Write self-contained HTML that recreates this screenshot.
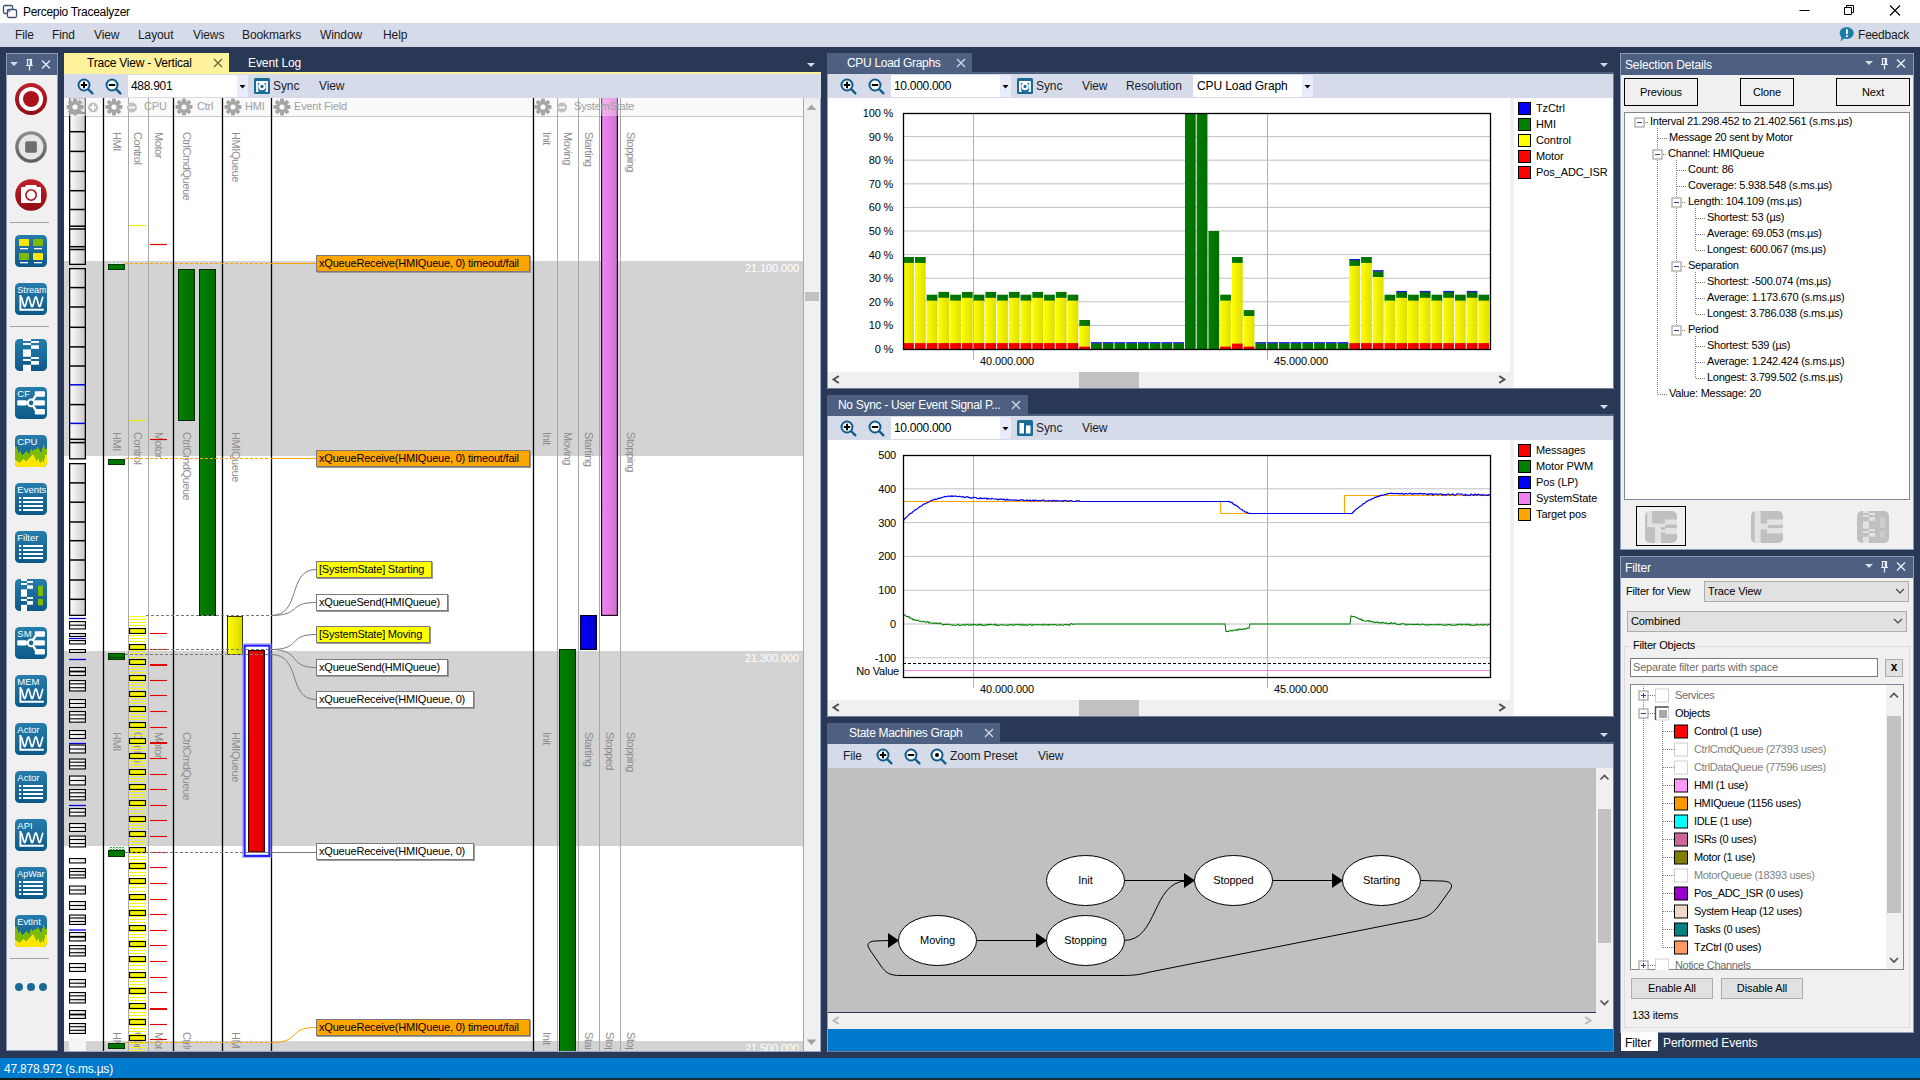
<!DOCTYPE html>
<html><head><meta charset="utf-8"><title>Percepio Tracealyzer</title>
<style>
html,body{margin:0;padding:0;width:1920px;height:1080px;overflow:hidden;background:#293955;font-family:"Liberation Sans",sans-serif;}
body div,body svg{position:absolute;box-sizing:border-box;}
.t{white-space:nowrap;line-height:1.25;}
.v{white-space:nowrap;line-height:1;transform-origin:0 0;transform:rotate(90deg);color:#8c8c8c;font-size:11px;letter-spacing:-0.42px;}
.lbl{white-space:nowrap;font-size:11px;letter-spacing:-0.19px;line-height:15px;height:17px;border:1px solid #7a7a7a;box-shadow:1px 1px 0 #9a9a9a;padding:0 0 0 2px;color:#000;}
</style></head><body>
<div style="left:0px;top:0px;width:1920px;height:23px;background:#ffffff;"></div>
<svg style="left:2px;top:4px;" width="16" height="16" viewBox="0 0 16 16"><rect x="1.5" y="1.5" width="9" height="8" rx="1.5" fill="none" stroke="#3b4e78" stroke-width="1.3"/><rect x="5.5" y="5.5" width="9" height="8" rx="1.5" fill="#fff" stroke="#3b4e78" stroke-width="1.3"/><rect x="5" y="5" width="3.5" height="3" fill="#3b4e78" opacity=".55"/></svg>
<div class="t" style="left:23px;top:5px;font-size:12px;color:#000;letter-spacing:-0.3px;">Percepio Tracealyzer</div>
<svg style="left:1790px;top:0px;" width="130" height="23" viewBox="0 0 130 23"><path d="M9.5 10.5h10" stroke="#000" stroke-width="1" fill="none"/><path d="M54.5 7.5h7v7h-7z M56.5 7.5v-2h7v7h-2" stroke="#000" stroke-width="1" fill="none"/><path d="M100 5.5l10 10M110 5.5l-10 10" stroke="#000" stroke-width="1.1" fill="none"/></svg>
<div style="left:0px;top:23px;width:1920px;height:24px;background:#d6dbe9;"></div>
<div class="t" style="left:15px;top:28px;font-size:12px;color:#1b1b1b;letter-spacing:-0.1px;">File</div>
<div class="t" style="left:52px;top:28px;font-size:12px;color:#1b1b1b;letter-spacing:-0.1px;">Find</div>
<div class="t" style="left:94px;top:28px;font-size:12px;color:#1b1b1b;letter-spacing:-0.1px;">View</div>
<div class="t" style="left:138px;top:28px;font-size:12px;color:#1b1b1b;letter-spacing:-0.1px;">Layout</div>
<div class="t" style="left:193px;top:28px;font-size:12px;color:#1b1b1b;letter-spacing:-0.1px;">Views</div>
<div class="t" style="left:242px;top:28px;font-size:12px;color:#1b1b1b;letter-spacing:-0.1px;">Bookmarks</div>
<div class="t" style="left:320px;top:28px;font-size:12px;color:#1b1b1b;letter-spacing:-0.1px;">Window</div>
<div class="t" style="left:383px;top:28px;font-size:12px;color:#1b1b1b;letter-spacing:-0.1px;">Help</div>
<svg style="left:1838px;top:26px;" width="18" height="18" viewBox="0 0 18 18"><path d="M8.7 1.2c4 0 7 2.6 7 5.9s-3 5.9-7 5.900c-.9 0-1.800-.1-2.600-.4L2.500 15.500l1-4.100C2.400 10.300 1.700 8.800 1.700 7.100c0-3.300 3-5.900 7-5.900z" fill="#1c7ca6"/><rect x="8" y="3.2" width="1.8" height="5" fill="#fff"/><rect x="8" y="9.300" width="1.800" height="1.800" fill="#fff"/></svg>
<div class="t" style="left:1858px;top:28px;font-size:12px;color:#1b1b1b;letter-spacing:-0.2px;">Feedback</div>
<div style="left:0px;top:1058px;width:1920px;height:22px;background:#007acc;"></div>
<div class="t" style="left:4px;top:1062px;font-size:12px;color:#fff;letter-spacing:-0.2px;">47.878.972 (s.ms.µs)</div>
<div style="left:0px;top:1078px;width:1920px;height:2px;background:#1c2a33;"></div>
<div style="left:0px;top:1078px;width:440px;height:2px;background:#0f1a14;"></div>
<div style="left:6px;top:53px;width:52px;height:998px;background:#f0f0f0;border:1px solid #8e9bbc;"></div>
<div style="left:6px;top:53px;width:52px;height:22px;background:#4d6082;border:1px solid #8e9bbc;border-bottom:none;"></div>
<svg style="left:7px;top:54px;" width="50" height="20" viewBox="0 0 50 20"><path d="M3 8h8l-4 4z" fill="#d6dbe9"/><path d="M20.500 5.500h4v6h-4z M19 11.500h7 M22.500 11.500v5" stroke="#e8ecf5" stroke-width="1.2" fill="none"/><path d="M23.500 5.500v6" stroke="#e8ecf5" stroke-width="1.600"/><path d="M35 6.500l8 8M43 6.500l-8 8" stroke="#e8ecf5" stroke-width="1.400" fill="none"/></svg>
<svg style="left:6px;top:53px;" width="52" height="998" viewBox="0 0 52 998"><defs><linearGradient id="lg" x1="0" y1="0" x2="0" y2="1"><stop offset="0" stop-color="#267dac"/><stop offset="1" stop-color="#0d5889"/></linearGradient><linearGradient id="rg" x1="0" y1="0" x2="0" y2="1"><stop offset="0" stop-color="#c0202c"/><stop offset="1" stop-color="#8f0d14"/></linearGradient><linearGradient id="gg" x1="0" y1="0" x2="0" y2="1"><stop offset="0" stop-color="#8d8d8d"/><stop offset="1" stop-color="#5e5e5e"/></linearGradient></defs><circle cx="25" cy="46" r="16" fill="url(#rg)"/><circle cx="25" cy="46" r="12.100" fill="#fff"/><circle cx="25" cy="46" r="8" fill="#ab121b"/><circle cx="25" cy="94" r="15.800" fill="url(#gg)"/><circle cx="25" cy="94" r="12.400" fill="#e6e6e6"/><rect x="19.200" y="88.200" width="11.700" height="11.600" rx="1.800" fill="#6e6e6e"/><circle cx="25" cy="142" r="15.800" fill="url(#rg)"/><path d="M16 134h3l1-2h10l1 2h3a1 1 0 0 1 1 1v14a1 1 0 0 1-1 1H16a1 1 0 0 1-1-1v-14a1 1 0 0 1 1-1z" fill="#fff"/><circle cx="25.100" cy="142" r="5.200" fill="#fff" stroke="#a9131c" stroke-width="1.600"/><path d="M4 169.5h39" stroke="#a0a0a0" stroke-width="1"/><path d="M4 273.5h39" stroke="#a0a0a0" stroke-width="1"/><path d="M4 905.5h39" stroke="#a0a0a0" stroke-width="1"/><rect x="9" y="182" width="32" height="32" rx="4.500" fill="url(#lg)"/><rect x="13" y="186" width="10" height="7" rx="0.800" fill="#ffe600"/><rect x="27" y="186" width="10" height="7" rx="0.800" fill="#7fba00"/><rect x="13" y="200" width="10" height="7" rx="0.800" fill="#7fba00"/><rect x="27" y="200" width="10" height="7" rx="0.800" fill="#ffe600"/><rect x="14" y="195" width="8" height="1.300" fill="#fff"/><rect x="14" y="209" width="8" height="1.300" fill="#fff"/><rect x="28" y="195" width="8" height="1.300" fill="#fff"/><rect x="28" y="209" width="8" height="1.300" fill="#fff"/><rect x="9" y="230" width="32" height="32" rx="4.500" fill="url(#lg)"/><text x="11.300" y="240" font-family="Liberation Sans" font-size="9.1" fill="#fff">Stream</text><path d="M14.400 242v14.800h23.400" stroke="#fff" stroke-width="1.900" fill="none"/><polyline points="14.90,244.00 15.41,244.43 15.92,245.66 16.43,247.45 16.94,249.48 17.45,251.40 17.95,252.84 18.46,253.55 18.97,253.41 19.48,252.43 19.99,250.79 20.50,248.80 21.01,246.81 21.52,245.17 22.03,244.19 22.54,244.05 23.05,244.76 23.55,246.20 24.06,248.12 24.57,250.15 25.08,251.94 25.59,253.17 26.10,253.60 26.61,253.17 27.12,251.94 27.63,250.15 28.14,248.12 28.65,246.20 29.15,244.76 29.66,244.05 30.17,244.19 30.68,245.17 31.19,246.81 31.70,248.80 32.21,250.79 32.72,252.43 33.23,253.41 33.74,253.55 34.25,252.84 34.75,251.40 35.26,249.48 35.77,247.45 36.28,245.66 36.79,244.43 37.30,244.00" stroke="#fff" stroke-width="1.700" fill="none" stroke-linejoin="round"/><rect x="9" y="286" width="32" height="32" rx="4.500" fill="url(#lg)"/><rect x="17" y="286" width="8" height="2" fill="#fff"/><rect x="17" y="290" width="8" height="2" fill="#fff"/><rect x="17" y="296.4" width="8" height="7.299999999999999" fill="#fff"/><rect x="17" y="306" width="8" height="2" fill="#fff"/><rect x="17" y="311.8" width="8" height="6.199999999999999" fill="#fff"/><rect x="25" y="288" width="8" height="2" fill="#fff"/><rect x="25" y="292.3" width="8" height="3.500000000000001" fill="#fff"/><rect x="25" y="304" width="8" height="2" fill="#fff"/><rect x="25" y="308" width="8" height="3.6999999999999993" fill="#fff"/><rect x="9" y="334" width="32" height="32" rx="4.500" fill="url(#lg)"/><text x="11.300" y="344" font-family="Liberation Sans" font-size="9.5" fill="#fff">CF</text><rect x="28.800" y="338.3" width="10.100" height="5.400" rx="1" fill="#fff"/><rect x="28.800" y="347.2" width="10.100" height="5.400" rx="1" fill="#fff"/><rect x="28.800" y="356" width="10.100" height="5.400" rx="1" fill="#fff"/><rect x="11.200" y="347.2" width="9.500" height="5.400" rx="1" fill="#fff"/><path d="M20 349.9h9M25.1 349.9l5.500-8.500M25.1 349.9l5.500 8.500" stroke="#fff" stroke-width="2.400" fill="none"/><circle cx="25.1" cy="349.9" r="4.300" fill="#fff"/><circle cx="25.1" cy="349.9" r="2.300" fill="#1a6a98"/><rect x="9" y="382" width="32" height="32" rx="4.500" fill="url(#lg)"/><clipPath id="c382"><rect x="9" y="382" width="32" height="32" rx="4.500"/></clipPath><g clip-path="url(#c382)"><rect x="9" y="394" width="1.050" height="20" fill="#7fba00"/><rect x="10" y="394" width="1.050" height="20" fill="#7fba00"/><rect x="11" y="397" width="1.050" height="17" fill="#7fba00"/><rect x="12" y="400" width="1.050" height="14" fill="#7fba00"/><rect x="13" y="399" width="1.050" height="15" fill="#7fba00"/><rect x="14" y="398" width="1.050" height="16" fill="#7fba00"/><rect x="15" y="401" width="1.050" height="13" fill="#7fba00"/><rect x="16" y="402" width="1.050" height="12" fill="#7fba00"/><rect x="17" y="401" width="1.050" height="13" fill="#7fba00"/><rect x="18" y="400" width="1.050" height="14" fill="#7fba00"/><rect x="19" y="399" width="1.050" height="15" fill="#7fba00"/><rect x="20" y="398" width="1.050" height="16" fill="#7fba00"/><rect x="21" y="399" width="1.050" height="15" fill="#7fba00"/><rect x="22" y="401" width="1.050" height="13" fill="#7fba00"/><rect x="23" y="400" width="1.050" height="14" fill="#7fba00"/><rect x="24" y="397" width="1.050" height="17" fill="#7fba00"/><rect x="25" y="396" width="1.050" height="18" fill="#7fba00"/><rect x="26" y="398" width="1.050" height="16" fill="#7fba00"/><rect x="27" y="397" width="1.050" height="17" fill="#7fba00"/><rect x="28" y="396" width="1.050" height="18" fill="#7fba00"/><rect x="29" y="397" width="1.050" height="17" fill="#7fba00"/><rect x="30" y="396" width="1.050" height="18" fill="#7fba00"/><rect x="31" y="394" width="1.050" height="20" fill="#7fba00"/><rect x="32" y="395" width="1.050" height="19" fill="#7fba00"/><rect x="33" y="397" width="1.050" height="17" fill="#7fba00"/><rect x="34" y="399" width="1.050" height="15" fill="#7fba00"/><rect x="35" y="398" width="1.050" height="16" fill="#7fba00"/><rect x="36" y="395" width="1.050" height="19" fill="#7fba00"/><rect x="37" y="392" width="1.050" height="22" fill="#7fba00"/><rect x="38" y="394" width="1.050" height="20" fill="#7fba00"/><rect x="39" y="396" width="1.050" height="18" fill="#7fba00"/><rect x="40" y="396" width="1.050" height="18" fill="#7fba00"/><rect x="9" y="407" width="1.050" height="7" fill="#ffe600"/><rect x="10" y="408" width="1.050" height="6" fill="#ffe600"/><rect x="11" y="408" width="1.050" height="6" fill="#ffe600"/><rect x="12" y="409" width="1.050" height="5" fill="#ffe600"/><rect x="13" y="410" width="1.050" height="4" fill="#ffe600"/><rect x="14" y="409" width="1.050" height="5" fill="#ffe600"/><rect x="15" y="408" width="1.050" height="6" fill="#ffe600"/><rect x="16" y="407" width="1.050" height="7" fill="#ffe600"/><rect x="17" y="406" width="1.050" height="8" fill="#ffe600"/><rect x="18" y="407" width="1.050" height="7" fill="#ffe600"/><rect x="19" y="408" width="1.050" height="6" fill="#ffe600"/><rect x="20" y="408" width="1.050" height="6" fill="#ffe600"/><rect x="21" y="407" width="1.050" height="7" fill="#ffe600"/><rect x="22" y="406" width="1.050" height="8" fill="#ffe600"/><rect x="23" y="405" width="1.050" height="9" fill="#ffe600"/><rect x="24" y="404" width="1.050" height="10" fill="#ffe600"/><rect x="25" y="403" width="1.050" height="11" fill="#ffe600"/><rect x="26" y="402" width="1.050" height="12" fill="#ffe600"/><rect x="27" y="402" width="1.050" height="12" fill="#ffe600"/><rect x="28" y="404" width="1.050" height="10" fill="#ffe600"/><rect x="29" y="406" width="1.050" height="8" fill="#ffe600"/><rect x="30" y="408" width="1.050" height="6" fill="#ffe600"/><rect x="31" y="407" width="1.050" height="7" fill="#ffe600"/><rect x="32" y="406" width="1.050" height="8" fill="#ffe600"/><rect x="33" y="409" width="1.050" height="5" fill="#ffe600"/><rect x="34" y="410" width="1.050" height="4" fill="#ffe600"/><rect x="35" y="409" width="1.050" height="5" fill="#ffe600"/><rect x="36" y="408" width="1.050" height="6" fill="#ffe600"/><rect x="37" y="409" width="1.050" height="5" fill="#ffe600"/><rect x="38" y="406" width="1.050" height="8" fill="#ffe600"/><rect x="39" y="402" width="1.050" height="12" fill="#ffe600"/><rect x="40" y="402" width="1.050" height="12" fill="#ffe600"/></g><text x="11.300" y="392" font-family="Liberation Sans" font-size="9.5" fill="#fff">CPU</text><rect x="9" y="430" width="32" height="32" rx="4.500" fill="url(#lg)"/><text x="11.300" y="440" font-family="Liberation Sans" font-size="9.5" fill="#fff">Events</text><rect x="13" y="444" width="2.200" height="2" fill="#fff"/><rect x="17" y="444" width="20" height="2" fill="#fff"/><rect x="13" y="448" width="2.200" height="2" fill="#fff"/><rect x="17" y="448" width="20" height="2" fill="#fff"/><rect x="13" y="452" width="2.200" height="2" fill="#fff"/><rect x="17" y="452" width="20" height="2" fill="#fff"/><rect x="13" y="456" width="2.200" height="2" fill="#fff"/><rect x="17" y="456" width="20" height="2" fill="#fff"/><rect x="9" y="478" width="32" height="32" rx="4.500" fill="url(#lg)"/><text x="11.300" y="488" font-family="Liberation Sans" font-size="9.5" fill="#fff">Filter</text><rect x="13" y="492" width="2.200" height="2" fill="#fff"/><rect x="17" y="492" width="20" height="2" fill="#fff"/><rect x="13" y="496" width="2.200" height="2" fill="#fff"/><rect x="17" y="496" width="20" height="2" fill="#fff"/><rect x="13" y="500" width="2.200" height="2" fill="#fff"/><rect x="17" y="500" width="20" height="2" fill="#fff"/><rect x="13" y="504" width="2.200" height="2" fill="#fff"/><rect x="17" y="504" width="20" height="2" fill="#fff"/><rect x="9" y="526" width="32" height="32" rx="4.500" fill="url(#lg)"/><rect x="15" y="526" width="6" height="2" fill="#fff"/><rect x="15" y="530" width="6" height="2" fill="#fff"/><rect x="15" y="536.4" width="6" height="7.299999999999999" fill="#fff"/><rect x="15" y="546" width="6" height="2" fill="#fff"/><rect x="15" y="551.8" width="6" height="6.199999999999999" fill="#fff"/><rect x="21" y="528" width="6" height="2" fill="#fff"/><rect x="21" y="532.3" width="6" height="3.500000000000001" fill="#fff"/><rect x="21" y="544" width="6" height="2" fill="#fff"/><rect x="21" y="548" width="6" height="3.6999999999999993" fill="#fff"/><rect x="32" y="532.7" width="5" height="10.300" fill="#7fba00"/><rect x="32" y="546" width="5" height="6.300" fill="#7fba00"/><rect x="9" y="574" width="32" height="32" rx="4.500" fill="url(#lg)"/><text x="11.300" y="584" font-family="Liberation Sans" font-size="9.5" fill="#fff">SM</text><rect x="28.800" y="578.3" width="10.100" height="5.400" rx="1" fill="#fff"/><rect x="28.800" y="587.2" width="10.100" height="5.400" rx="1" fill="#fff"/><rect x="28.800" y="596" width="10.100" height="5.400" rx="1" fill="#fff"/><rect x="11.200" y="587.2" width="9.500" height="5.400" rx="1" fill="#fff"/><path d="M20 589.9h9M25.1 589.9l5.500-8.500M25.1 589.9l5.500 8.500" stroke="#fff" stroke-width="2.400" fill="none"/><circle cx="25.1" cy="589.9" r="4.300" fill="#fff"/><circle cx="25.1" cy="589.9" r="2.300" fill="#1a6a98"/><rect x="9" y="622" width="32" height="32" rx="4.500" fill="url(#lg)"/><text x="11.300" y="632" font-family="Liberation Sans" font-size="9.5" fill="#fff">MEM</text><path d="M14.400 634v14.800h23.400" stroke="#fff" stroke-width="1.900" fill="none"/><polyline points="14.90,636.00 15.41,636.43 15.92,637.66 16.43,639.45 16.94,641.48 17.45,643.40 17.95,644.84 18.46,645.55 18.97,645.41 19.48,644.43 19.99,642.79 20.50,640.80 21.01,638.81 21.52,637.17 22.03,636.19 22.54,636.05 23.05,636.76 23.55,638.20 24.06,640.12 24.57,642.15 25.08,643.94 25.59,645.17 26.10,645.60 26.61,645.17 27.12,643.94 27.63,642.15 28.14,640.12 28.65,638.20 29.15,636.76 29.66,636.05 30.17,636.19 30.68,637.17 31.19,638.81 31.70,640.80 32.21,642.79 32.72,644.43 33.23,645.41 33.74,645.55 34.25,644.84 34.75,643.40 35.26,641.48 35.77,639.45 36.28,637.66 36.79,636.43 37.30,636.00" stroke="#fff" stroke-width="1.700" fill="none" stroke-linejoin="round"/><rect x="9" y="670" width="32" height="32" rx="4.500" fill="url(#lg)"/><text x="11.300" y="680" font-family="Liberation Sans" font-size="9.5" fill="#fff">Actor</text><path d="M14.400 682v14.800h23.400" stroke="#fff" stroke-width="1.900" fill="none"/><polyline points="14.90,684.00 15.41,684.43 15.92,685.66 16.43,687.45 16.94,689.48 17.45,691.40 17.95,692.84 18.46,693.55 18.97,693.41 19.48,692.43 19.99,690.79 20.50,688.80 21.01,686.81 21.52,685.17 22.03,684.19 22.54,684.05 23.05,684.76 23.55,686.20 24.06,688.12 24.57,690.15 25.08,691.94 25.59,693.17 26.10,693.60 26.61,693.17 27.12,691.94 27.63,690.15 28.14,688.12 28.65,686.20 29.15,684.76 29.66,684.05 30.17,684.19 30.68,685.17 31.19,686.81 31.70,688.80 32.21,690.79 32.72,692.43 33.23,693.41 33.74,693.55 34.25,692.84 34.75,691.40 35.26,689.48 35.77,687.45 36.28,685.66 36.79,684.43 37.30,684.00" stroke="#fff" stroke-width="1.700" fill="none" stroke-linejoin="round"/><rect x="9" y="718" width="32" height="32" rx="4.500" fill="url(#lg)"/><text x="11.300" y="728" font-family="Liberation Sans" font-size="9.5" fill="#fff">Actor</text><rect x="13" y="732" width="2.200" height="2" fill="#fff"/><rect x="17" y="732" width="20" height="2" fill="#fff"/><rect x="13" y="736" width="2.200" height="2" fill="#fff"/><rect x="17" y="736" width="20" height="2" fill="#fff"/><rect x="13" y="740" width="2.200" height="2" fill="#fff"/><rect x="17" y="740" width="20" height="2" fill="#fff"/><rect x="13" y="744" width="2.200" height="2" fill="#fff"/><rect x="17" y="744" width="20" height="2" fill="#fff"/><rect x="9" y="766" width="32" height="32" rx="4.500" fill="url(#lg)"/><text x="11.300" y="776" font-family="Liberation Sans" font-size="9.5" fill="#fff">API</text><path d="M14.400 778v14.800h23.400" stroke="#fff" stroke-width="1.900" fill="none"/><polyline points="14.90,780.00 15.41,780.43 15.92,781.66 16.43,783.45 16.94,785.48 17.45,787.40 17.95,788.84 18.46,789.55 18.97,789.41 19.48,788.43 19.99,786.79 20.50,784.80 21.01,782.81 21.52,781.17 22.03,780.19 22.54,780.05 23.05,780.76 23.55,782.20 24.06,784.12 24.57,786.15 25.08,787.94 25.59,789.17 26.10,789.60 26.61,789.17 27.12,787.94 27.63,786.15 28.14,784.12 28.65,782.20 29.15,780.76 29.66,780.05 30.17,780.19 30.68,781.17 31.19,782.81 31.70,784.80 32.21,786.79 32.72,788.43 33.23,789.41 33.74,789.55 34.25,788.84 34.75,787.40 35.26,785.48 35.77,783.45 36.28,781.66 36.79,780.43 37.30,780.00" stroke="#fff" stroke-width="1.700" fill="none" stroke-linejoin="round"/><rect x="9" y="814" width="32" height="32" rx="4.500" fill="url(#lg)"/><text x="11.300" y="824" font-family="Liberation Sans" font-size="9" fill="#fff">ApWar</text><rect x="13" y="828" width="2.200" height="2" fill="#fff"/><rect x="17" y="828" width="20" height="2" fill="#fff"/><rect x="13" y="832" width="2.200" height="2" fill="#fff"/><rect x="17" y="832" width="20" height="2" fill="#fff"/><rect x="13" y="836" width="2.200" height="2" fill="#fff"/><rect x="17" y="836" width="20" height="2" fill="#fff"/><rect x="13" y="840" width="2.200" height="2" fill="#fff"/><rect x="17" y="840" width="20" height="2" fill="#fff"/><rect x="9" y="862" width="32" height="32" rx="4.500" fill="url(#lg)"/><clipPath id="c862"><rect x="9" y="862" width="32" height="32" rx="4.500"/></clipPath><g clip-path="url(#c862)"><rect x="9" y="874" width="1.050" height="20" fill="#7fba00"/><rect x="10" y="874" width="1.050" height="20" fill="#7fba00"/><rect x="11" y="877" width="1.050" height="17" fill="#7fba00"/><rect x="12" y="880" width="1.050" height="14" fill="#7fba00"/><rect x="13" y="879" width="1.050" height="15" fill="#7fba00"/><rect x="14" y="878" width="1.050" height="16" fill="#7fba00"/><rect x="15" y="881" width="1.050" height="13" fill="#7fba00"/><rect x="16" y="882" width="1.050" height="12" fill="#7fba00"/><rect x="17" y="881" width="1.050" height="13" fill="#7fba00"/><rect x="18" y="880" width="1.050" height="14" fill="#7fba00"/><rect x="19" y="879" width="1.050" height="15" fill="#7fba00"/><rect x="20" y="878" width="1.050" height="16" fill="#7fba00"/><rect x="21" y="879" width="1.050" height="15" fill="#7fba00"/><rect x="22" y="881" width="1.050" height="13" fill="#7fba00"/><rect x="23" y="880" width="1.050" height="14" fill="#7fba00"/><rect x="24" y="877" width="1.050" height="17" fill="#7fba00"/><rect x="25" y="876" width="1.050" height="18" fill="#7fba00"/><rect x="26" y="878" width="1.050" height="16" fill="#7fba00"/><rect x="27" y="877" width="1.050" height="17" fill="#7fba00"/><rect x="28" y="876" width="1.050" height="18" fill="#7fba00"/><rect x="29" y="877" width="1.050" height="17" fill="#7fba00"/><rect x="30" y="876" width="1.050" height="18" fill="#7fba00"/><rect x="31" y="874" width="1.050" height="20" fill="#7fba00"/><rect x="32" y="875" width="1.050" height="19" fill="#7fba00"/><rect x="33" y="877" width="1.050" height="17" fill="#7fba00"/><rect x="34" y="879" width="1.050" height="15" fill="#7fba00"/><rect x="35" y="878" width="1.050" height="16" fill="#7fba00"/><rect x="36" y="875" width="1.050" height="19" fill="#7fba00"/><rect x="37" y="872" width="1.050" height="22" fill="#7fba00"/><rect x="38" y="874" width="1.050" height="20" fill="#7fba00"/><rect x="39" y="876" width="1.050" height="18" fill="#7fba00"/><rect x="40" y="876" width="1.050" height="18" fill="#7fba00"/><rect x="9" y="887" width="1.050" height="7" fill="#ffe600"/><rect x="10" y="888" width="1.050" height="6" fill="#ffe600"/><rect x="11" y="888" width="1.050" height="6" fill="#ffe600"/><rect x="12" y="889" width="1.050" height="5" fill="#ffe600"/><rect x="13" y="890" width="1.050" height="4" fill="#ffe600"/><rect x="14" y="889" width="1.050" height="5" fill="#ffe600"/><rect x="15" y="888" width="1.050" height="6" fill="#ffe600"/><rect x="16" y="887" width="1.050" height="7" fill="#ffe600"/><rect x="17" y="886" width="1.050" height="8" fill="#ffe600"/><rect x="18" y="887" width="1.050" height="7" fill="#ffe600"/><rect x="19" y="888" width="1.050" height="6" fill="#ffe600"/><rect x="20" y="888" width="1.050" height="6" fill="#ffe600"/><rect x="21" y="887" width="1.050" height="7" fill="#ffe600"/><rect x="22" y="886" width="1.050" height="8" fill="#ffe600"/><rect x="23" y="885" width="1.050" height="9" fill="#ffe600"/><rect x="24" y="884" width="1.050" height="10" fill="#ffe600"/><rect x="25" y="883" width="1.050" height="11" fill="#ffe600"/><rect x="26" y="882" width="1.050" height="12" fill="#ffe600"/><rect x="27" y="882" width="1.050" height="12" fill="#ffe600"/><rect x="28" y="884" width="1.050" height="10" fill="#ffe600"/><rect x="29" y="886" width="1.050" height="8" fill="#ffe600"/><rect x="30" y="888" width="1.050" height="6" fill="#ffe600"/><rect x="31" y="887" width="1.050" height="7" fill="#ffe600"/><rect x="32" y="886" width="1.050" height="8" fill="#ffe600"/><rect x="33" y="889" width="1.050" height="5" fill="#ffe600"/><rect x="34" y="890" width="1.050" height="4" fill="#ffe600"/><rect x="35" y="889" width="1.050" height="5" fill="#ffe600"/><rect x="36" y="888" width="1.050" height="6" fill="#ffe600"/><rect x="37" y="889" width="1.050" height="5" fill="#ffe600"/><rect x="38" y="886" width="1.050" height="8" fill="#ffe600"/><rect x="39" y="882" width="1.050" height="12" fill="#ffe600"/><rect x="40" y="882" width="1.050" height="12" fill="#ffe600"/></g><text x="11.300" y="872" font-family="Liberation Sans" font-size="9.2" fill="#fff">EvtInt</text><circle cx="13" cy="934" r="4" fill="#1a6a98"/><circle cx="25" cy="934" r="4" fill="#1a6a98"/><circle cx="37" cy="934" r="4" fill="#1a6a98"/></svg>
<div style="left:64px;top:53px;width:165px;height:20px;background:#fff29d;"></div>
<div class="t" style="left:87px;top:56px;font-size:12px;color:#000;letter-spacing:-0.22px;">Trace View - Vertical</div>
<svg style="left:211px;top:56px;" width="14" height="14" viewBox="0 0 14 14"><path d="M3 3l8 8M11 3l-8 8" stroke="#75633d" stroke-width="1.300" fill="none"/></svg>
<div class="t" style="left:248px;top:56px;font-size:12px;color:#fff;letter-spacing:-0.1px;">Event Log</div>
<svg style="left:805px;top:61px;" width="12" height="8" viewBox="0 0 12 8"><path d="M2 2h8l-4 4z" fill="#d6dbe9"/></svg>
<div style="left:64px;top:72px;width:757px;height:2px;background:#fff29d;"></div>
<div style="left:64px;top:74px;width:757px;height:24px;background:#d6dbe9;"></div>
<svg style="left:64px;top:74px;" width="300" height="24" viewBox="0 0 300 24"><circle cx="20" cy="11" r="5.500" fill="#fff" stroke="#0f5c8c" stroke-width="2"/><path d="M24.4 15.4l4 4" stroke="#0f5c8c" stroke-width="2.300" stroke-linecap="round"/><path d="M16.8 11h6.400M20 7.8v6.400" stroke="#000" stroke-width="2"/><circle cx="48" cy="11" r="5.500" fill="#fff" stroke="#0f5c8c" stroke-width="2"/><path d="M52.4 15.4l4 4" stroke="#0f5c8c" stroke-width="2.300" stroke-linecap="round"/><path d="M44.8 11h6.400" stroke="#000" stroke-width="2"/><rect x="190" y="4" width="16" height="16" rx="1.500" fill="#1a6a98"/><path d="M194.5 17h-1.500v-9h10v9h-1.500" stroke="#fff" stroke-width="1.800" fill="none"/><circle cx="198" cy="12.5" r="2.700" fill="#1a6a98" stroke="#fff" stroke-width="2.100"/></svg>
<div style="left:128px;top:75px;width:109px;height:22px;background:#fff;"></div>
<div style="left:237px;top:75px;width:11px;height:22px;background:#e9edfb;"></div>
<svg style="left:237px;top:75px;" width="11" height="22" viewBox="0 0 11 22"><path d="M2.500 10h6l-3 3.500z" fill="#000"/></svg>
<div class="t" style="left:131px;top:79px;font-size:12px;color:#000;letter-spacing:-0.3px;">488.901</div>
<div class="t" style="left:273px;top:79px;font-size:12px;color:#1b1b2b;letter-spacing:-0.1px;">Sync</div>
<div class="t" style="left:319px;top:79px;font-size:12px;color:#1b1b2b;letter-spacing:-0.1px;">View</div>
<div style="left:64px;top:98px;width:757px;height:954px;background:#fff;border-right:1px solid #9aa7cc;border-bottom:1px solid #9aa7cc;"></div>
<div style="left:64px;top:261px;width:739px;height:195px;background:#d3d3d3;"></div>
<div style="left:64px;top:651px;width:739px;height:195px;background:#d3d3d3;"></div>
<div style="left:64px;top:1041px;width:739px;height:10px;background:#d3d3d3;"></div>
<div class="t" style="left:745px;top:262px;font-size:11px;color:#fff;letter-spacing:-0.1px;">21.100.000</div>
<div class="t" style="left:745px;top:457px;font-size:11px;color:#fff;letter-spacing:-0.1px;">21.200.000</div>
<div class="t" style="left:745px;top:652px;font-size:11px;color:#fff;letter-spacing:-0.1px;">21.300.000</div>
<div class="t" style="left:745px;top:847px;font-size:11px;color:#fff;letter-spacing:-0.1px;">21.400.000</div>
<div style="left:745px;top:1042px;width:58px;height:9px;overflow:hidden"><div class="t" style="left:0;top:0;font-size:11px;color:#fff;letter-spacing:-0.1px">21.500.000</div></div>
<div style="left:64px;top:98px;width:739px;height:19px;background:#fafafa;border-bottom:1px solid #c8c8c8;"></div>
<div class="v" style="left:122px;top:132px">HMI</div>
<div class="v" style="left:143px;top:132px">Control</div>
<div class="v" style="left:164px;top:132px">Motor</div>
<div class="v" style="left:192px;top:132px">CtrlCmdQueue</div>
<div class="v" style="left:241px;top:132px">HMIQueue</div>
<div class="v" style="left:552px;top:132px">Init</div>
<div class="v" style="left:573px;top:132px">Moving</div>
<div class="v" style="left:594px;top:132px">Starting</div>
<div class="v" style="left:636px;top:132px">Stopping</div>
<div class="v" style="left:122px;top:432px">HMI</div>
<div class="v" style="left:143px;top:432px">Control</div>
<div class="v" style="left:164px;top:432px">Motor</div>
<div class="v" style="left:192px;top:432px">CtrlCmdQueue</div>
<div class="v" style="left:241px;top:432px">HMIQueue</div>
<div class="v" style="left:552px;top:432px">Init</div>
<div class="v" style="left:573px;top:432px">Moving</div>
<div class="v" style="left:594px;top:432px">Starting</div>
<div class="v" style="left:636px;top:432px">Stopping</div>
<div class="v" style="left:122px;top:732px">HMI</div>
<div class="v" style="left:143px;top:732px">Control</div>
<div class="v" style="left:164px;top:732px">Motor</div>
<div class="v" style="left:192px;top:732px">CtrlCmdQueue</div>
<div class="v" style="left:241px;top:732px">HMIQueue</div>
<div class="v" style="left:552px;top:732px">Init</div>
<div class="v" style="left:594px;top:732px">Starting</div>
<div class="v" style="left:615px;top:732px">Stopped</div>
<div class="v" style="left:636px;top:732px">Stopping</div>
<div style="left:108px;top:1032px;width:16px;height:17px;overflow:hidden"><div class="v" style="left:14px;top:0">HMI</div></div>
<div style="left:129px;top:1032px;width:16px;height:17px;overflow:hidden"><div class="v" style="left:14px;top:0">Control</div></div>
<div style="left:150px;top:1032px;width:16px;height:17px;overflow:hidden"><div class="v" style="left:14px;top:0">Motor</div></div>
<div style="left:178px;top:1032px;width:16px;height:17px;overflow:hidden"><div class="v" style="left:14px;top:0">CtrlCmdQueue</div></div>
<div style="left:227px;top:1032px;width:16px;height:17px;overflow:hidden"><div class="v" style="left:14px;top:0">HMIQueue</div></div>
<div style="left:538px;top:1032px;width:16px;height:17px;overflow:hidden"><div class="v" style="left:14px;top:0">Init</div></div>
<div style="left:580px;top:1032px;width:16px;height:17px;overflow:hidden"><div class="v" style="left:14px;top:0">Starting</div></div>
<div style="left:601px;top:1032px;width:16px;height:17px;overflow:hidden"><div class="v" style="left:14px;top:0">Stopped</div></div>
<div style="left:622px;top:1032px;width:16px;height:17px;overflow:hidden"><div class="v" style="left:14px;top:0">Stopping</div></div>
<svg style="left:64px;top:98px;" width="756" height="953" viewBox="0 0 756 953"><defs><linearGradient id="rul" x1="0" y1="0" x2="1" y2="0"><stop offset="0" stop-color="#fff"/><stop offset="1" stop-color="#c8c8c8"/></linearGradient><linearGradient id="rul2" x1="0" y1="0" x2="1" y2="0"><stop offset="0" stop-color="#fff"/><stop offset="1" stop-color="#e4e4e4"/></linearGradient><linearGradient id="grn" x1="0" y1="0" x2="1" y2="0"><stop offset="0" stop-color="#008200"/><stop offset="1" stop-color="#006a00"/></linearGradient><linearGradient id="yel" x1="0" y1="0" x2="1" y2="0"><stop offset="0" stop-color="#ffff00"/><stop offset="1" stop-color="#d8d800"/></linearGradient><linearGradient id="red" x1="0" y1="0" x2="1" y2="0"><stop offset="0" stop-color="#ff0000"/><stop offset="1" stop-color="#d60000"/></linearGradient><linearGradient id="pnk" x1="0" y1="0" x2="1" y2="0"><stop offset="0" stop-color="#f088f0"/><stop offset="1" stop-color="#d070d0"/></linearGradient><linearGradient id="blu" x1="0" y1="0" x2="1" y2="0"><stop offset="0" stop-color="#0000ff"/><stop offset="1" stop-color="#0000d0"/></linearGradient></defs><path d="M39.5 0V953" stroke="#000" stroke-width="1.3"/><path d="M109.5 0V953" stroke="#000" stroke-width="1.3"/><path d="M158.5 0V953" stroke="#000" stroke-width="1.3"/><path d="M207.5 0V953" stroke="#000" stroke-width="1.3"/><path d="M469.5 0V953" stroke="#000" stroke-width="1.3"/><path d="M64.5 0V953" stroke="#a8a8a8" stroke-width="1"/><path d="M84.5 0V953" stroke="#a8a8a8" stroke-width="1"/><path d="M493.5 0V953" stroke="#a8a8a8" stroke-width="1"/><path d="M514.5 0V953" stroke="#a8a8a8" stroke-width="1"/><path d="M535.5 0V953" stroke="#a8a8a8" stroke-width="1"/><path d="M556.5 0V953" stroke="#a8a8a8" stroke-width="1"/><rect x="5.65" y="-0.35" width="15.7" height="166.7" fill="url(#rul)" stroke="#000" stroke-width="1.3" /><path d="M5 15h17" stroke="#000" stroke-width="1.500"/><path d="M5 33.69999999999999h17" stroke="#000" stroke-width="1.500"/><path d="M5 53.400000000000006h17" stroke="#000" stroke-width="1.500"/><path d="M5 73.4h17" stroke="#000" stroke-width="1.500"/><path d="M5 92.69999999999999h17" stroke="#000" stroke-width="1.500"/><path d="M5 111.5h17" stroke="#000" stroke-width="1.500"/><path d="M5 128.2h17" stroke="#000" stroke-width="1.500"/><path d="M5 131h17" stroke="#000" stroke-width="1.500"/><path d="M5 148.7h17" stroke="#000" stroke-width="1.500"/><path d="M5 151.5h17" stroke="#000" stroke-width="1.500"/><rect x="5.65" y="170.65" width="15.7" height="190.2" fill="url(#rul)" stroke="#000" stroke-width="1.3" /><path d="M5 189.60000000000002h17" stroke="#000" stroke-width="1.500"/><path d="M5 209h17" stroke="#000" stroke-width="1.500"/><path d="M5 229.3h17" stroke="#000" stroke-width="1.500"/><path d="M5 248.89999999999998h17" stroke="#000" stroke-width="1.500"/><path d="M5 268h17" stroke="#000" stroke-width="1.500"/><path d="M5 306.6h17" stroke="#000" stroke-width="1.500"/><path d="M5 341.3h17" stroke="#000" stroke-width="1.500"/><path d="M5 344.6h17" stroke="#000" stroke-width="1.500"/><path d="M5 286.8h17" stroke="#0000e0" stroke-width="1.500"/><path d="M5 325.4h17" stroke="#0000e0" stroke-width="1.500"/><rect x="5.65" y="365.65" width="15.7" height="151.7" fill="url(#rul)" stroke="#000" stroke-width="1.3" /><path d="M5 384.9h17" stroke="#000" stroke-width="1.500"/><path d="M5 404.2h17" stroke="#000" stroke-width="1.500"/><path d="M5 424h17" stroke="#000" stroke-width="1.500"/><path d="M5 442.70000000000005h17" stroke="#000" stroke-width="1.500"/><path d="M5 462h17" stroke="#000" stroke-width="1.500"/><path d="M5 482h17" stroke="#000" stroke-width="1.500"/><path d="M5 501.29999999999995h17" stroke="#000" stroke-width="1.500"/><rect x="5" y="940" width="17" height="13" fill="#f4f4f4" /><path d="M5 520.5h17" stroke="#0000e0" stroke-width="1.300"/><path d="M5 540.5h17" stroke="#0000e0" stroke-width="1.300"/><path d="M5 561.5h17" stroke="#0000e0" stroke-width="1.300"/><path d="M5 645.5h17" stroke="#0000e0" stroke-width="1.300"/><path d="M5 707.5h17" stroke="#0000e0" stroke-width="1.300"/><path d="M5 832h17" stroke="#0000e0" stroke-width="1.300"/><rect x="5.55" y="523.55" width="15.9" height="7.4" fill="url(#rul2)" stroke="#000" stroke-width="1.1" /><path d="M5 527.2h17" stroke="#000" stroke-width="1.1"/><rect x="5.55" y="535.55" width="15.9" height="2.9" fill="url(#rul2)" stroke="#000" stroke-width="1.1" /><rect x="5.55" y="542.55" width="15.9" height="3.4" fill="url(#rul2)" stroke="#000" stroke-width="1.1" /><rect x="5.55" y="551.55" width="15.9" height="2.9" fill="url(#rul2)" stroke="#000" stroke-width="1.1" /><rect x="5.55" y="569.55" width="15.9" height="7.9" fill="url(#rul2)" stroke="#000" stroke-width="1.1" /><path d="M5 573.5h17" stroke="#000" stroke-width="1.8"/><rect x="5.55" y="582.55" width="15.9" height="10.4" fill="url(#rul2)" stroke="#000" stroke-width="1.1" /><path d="M5 585.8h17" stroke="#000" stroke-width="1.1"/><path d="M5 589.7h17" stroke="#000" stroke-width="1.1"/><rect x="5.55" y="601.55" width="15.9" height="7.9" fill="url(#rul2)" stroke="#000" stroke-width="1.1" /><path d="M5 605.5h17" stroke="#000" stroke-width="1.1"/><rect x="5.55" y="613.55" width="15.9" height="10.600000000000046" fill="url(#rul2)" stroke="#000" stroke-width="1.1" /><path d="M5 616.9h17" stroke="#000" stroke-width="1.1"/><path d="M5 620.8h17" stroke="#000" stroke-width="1.1"/><rect x="5.55" y="632.55" width="15.9" height="7.9" fill="url(#rul2)" stroke="#000" stroke-width="1.1" /><path d="M5 636.5h17" stroke="#000" stroke-width="1.1"/><rect x="5.55" y="647.05" width="15.9" height="7.9" fill="url(#rul2)" stroke="#000" stroke-width="1.1" /><path d="M5 651.0h17" stroke="#000" stroke-width="1.1"/><rect x="5.55" y="661.05" width="15.9" height="9.9" fill="url(#rul2)" stroke="#000" stroke-width="1.1" /><path d="M5 664.2h17" stroke="#000" stroke-width="1.1"/><path d="M5 667.8h17" stroke="#000" stroke-width="1.1"/><rect x="5.55" y="678.05" width="15.9" height="8.9" fill="url(#rul2)" stroke="#000" stroke-width="1.1" /><path d="M5 682.5h17" stroke="#000" stroke-width="1.1"/><rect x="5.55" y="691.55" width="15.9" height="10.4" fill="url(#rul2)" stroke="#000" stroke-width="1.1" /><path d="M5 694.8h17" stroke="#000" stroke-width="1.1"/><path d="M5 698.7h17" stroke="#000" stroke-width="1.1"/><rect x="5.55" y="710.55" width="15.9" height="7.4" fill="url(#rul2)" stroke="#000" stroke-width="1.1" /><path d="M5 714.2h17" stroke="#000" stroke-width="1.1"/><rect x="5.55" y="725.55" width="15.9" height="7.9" fill="url(#rul2)" stroke="#000" stroke-width="1.1" /><path d="M5 729.5h17" stroke="#000" stroke-width="1.1"/><rect x="5.55" y="738.05" width="15.9" height="10.9" fill="url(#rul2)" stroke="#000" stroke-width="1.1" /><path d="M5 741.5h17" stroke="#000" stroke-width="1.1"/><path d="M5 745.5h17" stroke="#000" stroke-width="1.1"/><rect x="5.55" y="760.55" width="15.9" height="4.4" fill="url(#rul2)" stroke="#000" stroke-width="1.1" /><rect x="5.55" y="770.55" width="15.9" height="9.4" fill="url(#rul2)" stroke="#000" stroke-width="1.1" /><path d="M5 773.5h17" stroke="#000" stroke-width="1.1"/><path d="M5 777.0h17" stroke="#000" stroke-width="1.1"/><rect x="5.55" y="788.05" width="15.9" height="7.9" fill="url(#rul2)" stroke="#000" stroke-width="1.1" /><path d="M5 792.0h17" stroke="#000" stroke-width="1.1"/><rect x="5.55" y="803.55" width="15.9" height="7.9" fill="url(#rul2)" stroke="#000" stroke-width="1.1" /><path d="M5 807.5h17" stroke="#000" stroke-width="1.1"/><rect x="5.55" y="817.05" width="15.9" height="9.4" fill="url(#rul2)" stroke="#000" stroke-width="1.1" /><path d="M5 820.0h17" stroke="#000" stroke-width="1.1"/><path d="M5 823.5h17" stroke="#000" stroke-width="1.1"/><rect x="5.55" y="834.55" width="15.9" height="8.4" fill="url(#rul2)" stroke="#000" stroke-width="1.1" /><path d="M5 838.8h17" stroke="#000" stroke-width="1.8"/><rect x="5.55" y="847.55" width="15.9" height="10.4" fill="url(#rul2)" stroke="#000" stroke-width="1.1" /><path d="M5 850.8h17" stroke="#000" stroke-width="1.1"/><path d="M5 854.7h17" stroke="#000" stroke-width="1.1"/><rect x="5.55" y="865.55" width="15.9" height="7.9" fill="url(#rul2)" stroke="#000" stroke-width="1.1" /><path d="M5 869.5h17" stroke="#000" stroke-width="1.1"/><rect x="5.55" y="881.55" width="15.9" height="7.4" fill="url(#rul2)" stroke="#000" stroke-width="1.1" /><path d="M5 885.2h17" stroke="#000" stroke-width="1.1"/><rect x="5.55" y="894.55" width="15.9" height="10.4" fill="url(#rul2)" stroke="#000" stroke-width="1.1" /><path d="M5 897.8h17" stroke="#000" stroke-width="1.1"/><path d="M5 901.7h17" stroke="#000" stroke-width="1.1"/><rect x="5.55" y="912.55" width="15.9" height="7.9" fill="url(#rul2)" stroke="#000" stroke-width="1.1" /><path d="M5 916.5h17" stroke="#000" stroke-width="1.8"/><rect x="5.55" y="925.55" width="15.9" height="9.9" fill="url(#rul2)" stroke="#000" stroke-width="1.1" /><path d="M5 928.7h17" stroke="#000" stroke-width="1.1"/><path d="M5 932.3h17" stroke="#000" stroke-width="1.1"/><rect x="44.5" y="166.5" width="16" height="5" fill="#007800" stroke="#003800" stroke-width="1" /><rect x="44.5" y="361.5" width="16" height="5" fill="#007800" stroke="#003800" stroke-width="1" /><rect x="44.5" y="945.5" width="16" height="5" fill="#007800" stroke="#003800" stroke-width="1" /><rect x="44.5" y="555.5" width="16" height="6" fill="#007800" stroke="#003800" stroke-width="1" /><path d="M44 559.5h17" stroke="#003800" stroke-width="1"/><rect x="44.5" y="752.5" width="16" height="6" fill="#007800" stroke="#003800" stroke-width="1" /><path d="M46 749.5h14M46 751.5h14" stroke="#38b038" stroke-width="1" stroke-dasharray="2 1"/><path d="M45 750.5h16" stroke="#a8e0a8" stroke-width="1" stroke-dasharray="1 2"/><path d="M47 165.5h11" stroke="#e8ffe8" stroke-width="1" stroke-dasharray="2 2"/><path d="M47 360.5h11" stroke="#e8ffe8" stroke-width="1" stroke-dasharray="2 2"/><path d="M65 127.5h17" stroke="#e8e800" stroke-width="1.200"/><path d="M65 322.5h17" stroke="#e8e800" stroke-width="1.200"/><path d="M65 518.5h17" stroke="#f8f800" stroke-width="1"/><path d="M65 521.5h17" stroke="#f8f800" stroke-width="1"/><path d="M65 524.5h17" stroke="#f8f800" stroke-width="1"/><path d="M65 527.5h17" stroke="#f8f800" stroke-width="1"/><path d="M65 530.5h17" stroke="#f8f800" stroke-width="1"/><path d="M65 534.5h17" stroke="#f8f800" stroke-width="1"/><path d="M65 537.5h17" stroke="#f8f800" stroke-width="1"/><path d="M65 540.5h17" stroke="#f8f800" stroke-width="1"/><path d="M65 543.5h17" stroke="#f8f800" stroke-width="1"/><path d="M65 546.5h17" stroke="#f8f800" stroke-width="1"/><path d="M65 549.5h17" stroke="#f8f800" stroke-width="1"/><path d="M65 552.5h17" stroke="#f8f800" stroke-width="1"/><path d="M65 555.5h17" stroke="#f8f800" stroke-width="1"/><path d="M65 559.5h17" stroke="#f8f800" stroke-width="1"/><path d="M65 562.5h17" stroke="#f8f800" stroke-width="1"/><path d="M65 565.5h17" stroke="#f8f800" stroke-width="1"/><path d="M65 568.5h17" stroke="#f8f800" stroke-width="1"/><path d="M65 571.5h17" stroke="#f8f800" stroke-width="1"/><path d="M65 574.5h17" stroke="#f8f800" stroke-width="1"/><path d="M65 577.5h17" stroke="#f8f800" stroke-width="1"/><path d="M65 580.5h17" stroke="#f8f800" stroke-width="1"/><path d="M65 584.5h17" stroke="#f8f800" stroke-width="1"/><path d="M65 587.5h17" stroke="#f8f800" stroke-width="1"/><path d="M65 590.5h17" stroke="#f8f800" stroke-width="1"/><path d="M65 593.5h17" stroke="#f8f800" stroke-width="1"/><path d="M65 596.5h17" stroke="#f8f800" stroke-width="1"/><path d="M65 599.5h17" stroke="#f8f800" stroke-width="1"/><path d="M65 602.5h17" stroke="#f8f800" stroke-width="1"/><path d="M65 605.5h17" stroke="#f8f800" stroke-width="1"/><path d="M65 608.5h17" stroke="#f8f800" stroke-width="1"/><path d="M65 612.5h17" stroke="#f8f800" stroke-width="1"/><path d="M65 615.5h17" stroke="#f8f800" stroke-width="1"/><path d="M65 618.5h17" stroke="#f8f800" stroke-width="1"/><path d="M65 621.5h17" stroke="#f8f800" stroke-width="1"/><path d="M65 624.5h17" stroke="#f8f800" stroke-width="1"/><path d="M65 627.5h17" stroke="#f8f800" stroke-width="1"/><path d="M65 630.5h17" stroke="#f8f800" stroke-width="1"/><path d="M65 633.5h17" stroke="#f8f800" stroke-width="1"/><path d="M65 637.5h17" stroke="#f8f800" stroke-width="1"/><path d="M65 640.5h17" stroke="#f8f800" stroke-width="1"/><path d="M65 643.5h17" stroke="#f8f800" stroke-width="1"/><path d="M65 646.5h17" stroke="#f8f800" stroke-width="1"/><path d="M65 649.5h17" stroke="#f8f800" stroke-width="1"/><path d="M65 652.5h17" stroke="#f8f800" stroke-width="1"/><path d="M65 655.5h17" stroke="#f8f800" stroke-width="1"/><path d="M65 658.5h17" stroke="#f8f800" stroke-width="1"/><path d="M65 662.5h17" stroke="#f8f800" stroke-width="1"/><path d="M65 665.5h17" stroke="#f8f800" stroke-width="1"/><path d="M65 668.5h17" stroke="#f8f800" stroke-width="1"/><path d="M65 671.5h17" stroke="#f8f800" stroke-width="1"/><path d="M65 674.5h17" stroke="#f8f800" stroke-width="1"/><path d="M65 677.5h17" stroke="#f8f800" stroke-width="1"/><path d="M65 680.5h17" stroke="#f8f800" stroke-width="1"/><path d="M65 683.5h17" stroke="#f8f800" stroke-width="1"/><path d="M65 686.5h17" stroke="#f8f800" stroke-width="1"/><path d="M65 690.5h17" stroke="#f8f800" stroke-width="1"/><path d="M65 693.5h17" stroke="#f8f800" stroke-width="1"/><path d="M65 696.5h17" stroke="#f8f800" stroke-width="1"/><path d="M65 699.5h17" stroke="#f8f800" stroke-width="1"/><path d="M65 702.5h17" stroke="#f8f800" stroke-width="1"/><path d="M65 705.5h17" stroke="#f8f800" stroke-width="1"/><path d="M65 708.5h17" stroke="#f8f800" stroke-width="1"/><path d="M65 711.5h17" stroke="#f8f800" stroke-width="1"/><path d="M65 715.5h17" stroke="#f8f800" stroke-width="1"/><path d="M65 718.5h17" stroke="#f8f800" stroke-width="1"/><path d="M65 721.5h17" stroke="#f8f800" stroke-width="1"/><path d="M65 724.5h17" stroke="#f8f800" stroke-width="1"/><path d="M65 727.5h17" stroke="#f8f800" stroke-width="1"/><path d="M65 730.5h17" stroke="#f8f800" stroke-width="1"/><path d="M65 733.5h17" stroke="#f8f800" stroke-width="1"/><path d="M65 736.5h17" stroke="#f8f800" stroke-width="1"/><path d="M65 740.5h17" stroke="#f8f800" stroke-width="1"/><path d="M65 743.5h17" stroke="#f8f800" stroke-width="1"/><path d="M65 746.5h17" stroke="#f8f800" stroke-width="1"/><path d="M65 749.5h17" stroke="#f8f800" stroke-width="1"/><path d="M65 752.5h17" stroke="#f8f800" stroke-width="1"/><path d="M65 755.5h17" stroke="#f8f800" stroke-width="1"/><path d="M65 758.5h17" stroke="#f8f800" stroke-width="1"/><path d="M65 761.5h17" stroke="#f8f800" stroke-width="1"/><path d="M65 764.5h17" stroke="#f8f800" stroke-width="1"/><path d="M65 768.5h17" stroke="#f8f800" stroke-width="1"/><path d="M65 771.5h17" stroke="#f8f800" stroke-width="1"/><path d="M65 774.5h17" stroke="#f8f800" stroke-width="1"/><path d="M65 777.5h17" stroke="#f8f800" stroke-width="1"/><path d="M65 780.5h17" stroke="#f8f800" stroke-width="1"/><path d="M65 783.5h17" stroke="#f8f800" stroke-width="1"/><path d="M65 786.5h17" stroke="#f8f800" stroke-width="1"/><path d="M65 789.5h17" stroke="#f8f800" stroke-width="1"/><path d="M65 793.5h17" stroke="#f8f800" stroke-width="1"/><path d="M65 796.5h17" stroke="#f8f800" stroke-width="1"/><path d="M65 799.5h17" stroke="#f8f800" stroke-width="1"/><path d="M65 802.5h17" stroke="#f8f800" stroke-width="1"/><path d="M65 805.5h17" stroke="#f8f800" stroke-width="1"/><path d="M65 808.5h17" stroke="#f8f800" stroke-width="1"/><path d="M65 811.5h17" stroke="#f8f800" stroke-width="1"/><path d="M65 814.5h17" stroke="#f8f800" stroke-width="1"/><path d="M65 818.5h17" stroke="#f8f800" stroke-width="1"/><path d="M65 821.5h17" stroke="#f8f800" stroke-width="1"/><path d="M65 824.5h17" stroke="#f8f800" stroke-width="1"/><path d="M65 827.5h17" stroke="#f8f800" stroke-width="1"/><path d="M65 830.5h17" stroke="#f8f800" stroke-width="1"/><path d="M65 833.5h17" stroke="#f8f800" stroke-width="1"/><path d="M65 836.5h17" stroke="#f8f800" stroke-width="1"/><path d="M65 839.5h17" stroke="#f8f800" stroke-width="1"/><path d="M65 842.5h17" stroke="#f8f800" stroke-width="1"/><path d="M65 846.5h17" stroke="#f8f800" stroke-width="1"/><path d="M65 849.5h17" stroke="#f8f800" stroke-width="1"/><path d="M65 852.5h17" stroke="#f8f800" stroke-width="1"/><path d="M65 855.5h17" stroke="#f8f800" stroke-width="1"/><path d="M65 858.5h17" stroke="#f8f800" stroke-width="1"/><path d="M65 861.5h17" stroke="#f8f800" stroke-width="1"/><path d="M65 864.5h17" stroke="#f8f800" stroke-width="1"/><path d="M65 867.5h17" stroke="#f8f800" stroke-width="1"/><path d="M65 871.5h17" stroke="#f8f800" stroke-width="1"/><path d="M65 874.5h17" stroke="#f8f800" stroke-width="1"/><path d="M65 877.5h17" stroke="#f8f800" stroke-width="1"/><path d="M65 880.5h17" stroke="#f8f800" stroke-width="1"/><path d="M65 883.5h17" stroke="#f8f800" stroke-width="1"/><path d="M65 886.5h17" stroke="#f8f800" stroke-width="1"/><path d="M65 889.5h17" stroke="#f8f800" stroke-width="1"/><path d="M65 892.5h17" stroke="#f8f800" stroke-width="1"/><path d="M65 896.5h17" stroke="#f8f800" stroke-width="1"/><path d="M65 899.5h17" stroke="#f8f800" stroke-width="1"/><path d="M65 902.5h17" stroke="#f8f800" stroke-width="1"/><path d="M65 905.5h17" stroke="#f8f800" stroke-width="1"/><path d="M65 908.5h17" stroke="#f8f800" stroke-width="1"/><path d="M65 911.5h17" stroke="#f8f800" stroke-width="1"/><path d="M65 914.5h17" stroke="#f8f800" stroke-width="1"/><path d="M65 917.5h17" stroke="#f8f800" stroke-width="1"/><path d="M65 920.5h17" stroke="#f8f800" stroke-width="1"/><path d="M65 924.5h17" stroke="#f8f800" stroke-width="1"/><path d="M65 927.5h17" stroke="#f8f800" stroke-width="1"/><path d="M65 930.5h17" stroke="#f8f800" stroke-width="1"/><path d="M65 933.5h17" stroke="#f8f800" stroke-width="1"/><path d="M65 936.5h17" stroke="#f8f800" stroke-width="1"/><path d="M65 939.5h17" stroke="#f8f800" stroke-width="1"/><path d="M65 942.5h17" stroke="#f8f800" stroke-width="1"/><path d="M65 945.5h17" stroke="#f8f800" stroke-width="1"/><path d="M65 949.5h17" stroke="#f8f800" stroke-width="1"/><path d="M65 952.5h17" stroke="#f8f800" stroke-width="1"/><rect x="65.55" y="530.55" width="15.9" height="4.9" fill="#f2f200" stroke="#000" stroke-width="1.1" /><rect x="65.55" y="546.55" width="15.9" height="4.9" fill="#f2f200" stroke="#000" stroke-width="1.1" /><rect x="65.55" y="561.55" width="15.9" height="4.9" fill="#f2f200" stroke="#000" stroke-width="1.1" /><rect x="65.55" y="577.55" width="15.9" height="4.9" fill="#f2f200" stroke="#000" stroke-width="1.1" /><rect x="65.55" y="593.55" width="15.9" height="4.9" fill="#f2f200" stroke="#000" stroke-width="1.1" /><rect x="65.55" y="608.55" width="15.9" height="4.9" fill="#f2f200" stroke="#000" stroke-width="1.1" /><rect x="65.55" y="624.55" width="15.9" height="4.9" fill="#f2f200" stroke="#000" stroke-width="1.1" /><rect x="65.55" y="640.55" width="15.9" height="4.9" fill="#f2f200" stroke="#000" stroke-width="1.1" /><rect x="65.55" y="655.55" width="15.9" height="4.9" fill="#f2f200" stroke="#000" stroke-width="1.1" /><rect x="65.55" y="671.55" width="15.9" height="4.9" fill="#f2f200" stroke="#000" stroke-width="1.1" /><rect x="65.55" y="686.55" width="15.9" height="4.9" fill="#f2f200" stroke="#000" stroke-width="1.1" /><rect x="65.55" y="702.55" width="15.9" height="4.9" fill="#f2f200" stroke="#000" stroke-width="1.1" /><rect x="65.55" y="718.55" width="15.9" height="4.9" fill="#f2f200" stroke="#000" stroke-width="1.1" /><rect x="65.55" y="733.55" width="15.9" height="4.9" fill="#f2f200" stroke="#000" stroke-width="1.1" /><rect x="65.55" y="749.55" width="15.9" height="4.9" fill="#f2f200" stroke="#000" stroke-width="1.1" /><rect x="65.55" y="765.55" width="15.9" height="4.9" fill="#f2f200" stroke="#000" stroke-width="1.1" /><rect x="65.55" y="780.55" width="15.9" height="4.9" fill="#f2f200" stroke="#000" stroke-width="1.1" /><rect x="65.55" y="796.55" width="15.9" height="4.9" fill="#f2f200" stroke="#000" stroke-width="1.1" /><rect x="65.55" y="812.55" width="15.9" height="4.9" fill="#f2f200" stroke="#000" stroke-width="1.1" /><rect x="65.55" y="827.55" width="15.9" height="4.9" fill="#f2f200" stroke="#000" stroke-width="1.1" /><rect x="65.55" y="843.55" width="15.9" height="4.9" fill="#f2f200" stroke="#000" stroke-width="1.1" /><rect x="65.55" y="858.55" width="15.9" height="4.9" fill="#f2f200" stroke="#000" stroke-width="1.1" /><rect x="65.55" y="874.55" width="15.9" height="4.9" fill="#f2f200" stroke="#000" stroke-width="1.1" /><rect x="65.55" y="890.55" width="15.9" height="4.9" fill="#f2f200" stroke="#000" stroke-width="1.1" /><rect x="65.55" y="905.55" width="15.9" height="4.9" fill="#f2f200" stroke="#000" stroke-width="1.1" /><rect x="65.55" y="921.55" width="15.9" height="4.9" fill="#f2f200" stroke="#000" stroke-width="1.1" /><rect x="65.55" y="937.55" width="15.9" height="4.9" fill="#f2f200" stroke="#000" stroke-width="1.1" /><path d="M86 146.5h17" stroke="#e00000" stroke-width="1.200"/><path d="M86 341.5h17" stroke="#e00000" stroke-width="1.200"/><path d="M86 535.5h17" stroke="#e80000" stroke-width="1.1"/><path d="M86 551.5h17" stroke="#e80000" stroke-width="1.1"/><path d="M86 567.0h17" stroke="#e80000" stroke-width="2"/><path d="M86 582.5h17" stroke="#e80000" stroke-width="1.1"/><path d="M86 597.5h17" stroke="#e80000" stroke-width="1.1"/><path d="M86 613.5h17" stroke="#e80000" stroke-width="1.1"/><path d="M86 629.5h17" stroke="#e80000" stroke-width="1.1"/><path d="M86 645.0h17" stroke="#e80000" stroke-width="2"/><path d="M86 660.5h17" stroke="#e80000" stroke-width="1.1"/><path d="M86 676.5h17" stroke="#e80000" stroke-width="1.1"/><path d="M86 691.5h17" stroke="#e80000" stroke-width="1.1"/><path d="M86 707.5h17" stroke="#e80000" stroke-width="1.1"/><path d="M86 722.5h17" stroke="#e80000" stroke-width="1.1"/><path d="M86 738.5h17" stroke="#e80000" stroke-width="1.1"/><path d="M86 754.5h17" stroke="#e80000" stroke-width="1.1"/><path d="M86 769.5h17" stroke="#e80000" stroke-width="1.1"/><path d="M86 785.5h17" stroke="#e80000" stroke-width="1.1"/><path d="M86 801.5h17" stroke="#e80000" stroke-width="1.1"/><path d="M86 816.5h17" stroke="#e80000" stroke-width="1.1"/><path d="M86 832.5h17" stroke="#e80000" stroke-width="1.1"/><path d="M86 847.5h17" stroke="#e80000" stroke-width="1.1"/><path d="M86 863.5h17" stroke="#e80000" stroke-width="1.1"/><path d="M86 879.5h17" stroke="#e80000" stroke-width="1.1"/><path d="M86 894.5h17" stroke="#e80000" stroke-width="1.1"/><path d="M86 911.0h17" stroke="#e80000" stroke-width="2"/><path d="M86 926.5h17" stroke="#e80000" stroke-width="1.1"/><path d="M86 941.5h17" stroke="#e80000" stroke-width="1.1"/><rect x="114.5" y="171.5" width="16" height="151" fill="url(#grn)" stroke="#002800" stroke-width="1" /><rect x="135.5" y="171.5" width="16" height="346" fill="url(#grn)" stroke="#002800" stroke-width="1" /><rect x="163.5" y="518.5" width="15" height="38" fill="url(#yel)" stroke="#3a3a00" stroke-width="1" /><rect x="180.6" y="547.6" width="24.8" height="210.3" fill="#fff" stroke="#2222ff" stroke-width="2.2" /><rect x="178.7" y="545.7" width="28.600" height="214" fill="none" stroke="#8080ff" stroke-width="1" opacity=".6"/><rect x="184.6" y="552.6" width="15.8" height="201.3" fill="url(#red)" stroke="#300000" stroke-width="1.2" /><rect x="537.6" y="-7.4" width="15.8" height="524.8" fill="url(#pnk)" stroke="#200020" stroke-width="1.2" /><rect x="516.6" y="517.6" width="15.8" height="33.8" fill="url(#blu)" stroke="#000020" stroke-width="1.2" /><rect x="495.5" y="551.5" width="16" height="404" fill="url(#grn)" stroke="#002800" stroke-width="1" /><path d="M61 165.5H207" stroke="#ffa500" stroke-width="1" stroke-dasharray="3 2"/><path d="M207 165.5H252" stroke="#ffa500" stroke-width="1"/><path d="M61 360.5H207" stroke="#ffa500" stroke-width="1" stroke-dasharray="3 2"/><path d="M207 360.5H252" stroke="#ffa500" stroke-width="1"/><path d="M82 517.5H207" stroke="#7a7a7a" stroke-width="1" stroke-dasharray="3 2"/><path d="M82 551.5H207" stroke="#7a7a7a" stroke-width="1" stroke-dasharray="3 2"/><path d="M61 556.5H207" stroke="#7a7a7a" stroke-width="1" stroke-dasharray="3 2"/><path d="M61 754.5H207" stroke="#7a7a7a" stroke-width="1" stroke-dasharray="3 2"/><path d="M61 944.5H207" stroke="#ffa500" stroke-width="1" stroke-dasharray="3 2"/><path d="M207 517.5C238 517.5 223 471.5 252 471.5" stroke="#7a7a7a" stroke-width="1" fill="none"/><path d="M207 517.5C238 517.5 223 504.5 252 504.5" stroke="#7a7a7a" stroke-width="1" fill="none"/><path d="M207 551.5C238 551.5 223 536.5 252 536.5" stroke="#7a7a7a" stroke-width="1" fill="none"/><path d="M207 551.5C238 551.5 223 569.5 252 569.5" stroke="#7a7a7a" stroke-width="1" fill="none"/><path d="M207 556.5C238 556.5 223 601.5 252 601.5" stroke="#7a7a7a" stroke-width="1" fill="none"/><path d="M207 754.5H252" stroke="#7a7a7a" stroke-width="1"/><path d="M207 944.5C238 944.5 223 929.5 252 929.5" stroke="#ffa500" stroke-width="1" fill="none"/></svg>
<div class="lbl" style="left:316px;top:255px;width:214px;background:#ffa500">xQueueReceive(HMIQueue, 0) timeout/fail</div>
<div class="lbl" style="left:316px;top:450px;width:214px;background:#ffa500">xQueueReceive(HMIQueue, 0) timeout/fail</div>
<div class="lbl" style="left:316px;top:561px;width:116px;background:#ffff00">[SystemState] Starting</div>
<div class="lbl" style="left:316px;top:594px;width:132px;background:#fff">xQueueSend(HMIQueue)</div>
<div class="lbl" style="left:316px;top:626px;width:114px;background:#ffff00">[SystemState] Moving</div>
<div class="lbl" style="left:316px;top:659px;width:132px;background:#fff">xQueueSend(HMIQueue)</div>
<div class="lbl" style="left:316px;top:691px;width:158px;background:#fff">xQueueReceive(HMIQueue, 0)</div>
<div class="lbl" style="left:316px;top:843px;width:158px;background:#fff">xQueueReceive(HMIQueue, 0)</div>
<div class="lbl" style="left:316px;top:1019px;width:214px;background:#ffa500">xQueueReceive(HMIQueue, 0) timeout/fail</div>
<div style="left:68px;top:98px;width:19px;height:18px;background:rgba(250,250,250,0.5);"></div>
<div style="left:600px;top:98px;width:19px;height:18px;background:rgba(255,255,255,0.35);"></div>
<svg style="left:64px;top:98px;" width="739" height="19" viewBox="0 0 739 19"><rect x="9" y="0.5" width="4" height="17" rx="0.800" fill="#a6a6a6" transform="rotate(0 11 9)"/><rect x="9" y="0.5" width="4" height="17" rx="0.800" fill="#a6a6a6" transform="rotate(45 11 9)"/><rect x="9" y="0.5" width="4" height="17" rx="0.800" fill="#a6a6a6" transform="rotate(90 11 9)"/><rect x="9" y="0.5" width="4" height="17" rx="0.800" fill="#a6a6a6" transform="rotate(135 11 9)"/><circle cx="11" cy="9" r="6" fill="#a6a6a6"/><circle cx="11" cy="9" r="2.600" fill="#fff"/><circle cx="29" cy="9.5" r="5" fill="#c0c0c0"/><path d="M26 9.5h6" stroke="#fff" stroke-width="1.800"/><path d="M29 6.5v6" stroke="#fff" stroke-width="1.800"/><rect x="48" y="0.5" width="4" height="17" rx="0.800" fill="#a6a6a6" transform="rotate(0 50 9)"/><rect x="48" y="0.5" width="4" height="17" rx="0.800" fill="#a6a6a6" transform="rotate(45 50 9)"/><rect x="48" y="0.5" width="4" height="17" rx="0.800" fill="#a6a6a6" transform="rotate(90 50 9)"/><rect x="48" y="0.5" width="4" height="17" rx="0.800" fill="#a6a6a6" transform="rotate(135 50 9)"/><circle cx="50" cy="9" r="6" fill="#a6a6a6"/><circle cx="50" cy="9" r="2.600" fill="#fff"/><circle cx="68" cy="9.5" r="5" fill="#c0c0c0"/><path d="M65 9.5h6" stroke="#fff" stroke-width="1.800"/><rect x="118" y="0.5" width="4" height="17" rx="0.800" fill="#a6a6a6" transform="rotate(0 120 9)"/><rect x="118" y="0.5" width="4" height="17" rx="0.800" fill="#a6a6a6" transform="rotate(45 120 9)"/><rect x="118" y="0.5" width="4" height="17" rx="0.800" fill="#a6a6a6" transform="rotate(90 120 9)"/><rect x="118" y="0.5" width="4" height="17" rx="0.800" fill="#a6a6a6" transform="rotate(135 120 9)"/><circle cx="120" cy="9" r="6" fill="#a6a6a6"/><circle cx="120" cy="9" r="2.600" fill="#fff"/><rect x="167" y="0.5" width="4" height="17" rx="0.800" fill="#a6a6a6" transform="rotate(0 169 9)"/><rect x="167" y="0.5" width="4" height="17" rx="0.800" fill="#a6a6a6" transform="rotate(45 169 9)"/><rect x="167" y="0.5" width="4" height="17" rx="0.800" fill="#a6a6a6" transform="rotate(90 169 9)"/><rect x="167" y="0.5" width="4" height="17" rx="0.800" fill="#a6a6a6" transform="rotate(135 169 9)"/><circle cx="169" cy="9" r="6" fill="#a6a6a6"/><circle cx="169" cy="9" r="2.600" fill="#fff"/><rect x="216" y="0.5" width="4" height="17" rx="0.800" fill="#a6a6a6" transform="rotate(0 218 9)"/><rect x="216" y="0.5" width="4" height="17" rx="0.800" fill="#a6a6a6" transform="rotate(45 218 9)"/><rect x="216" y="0.5" width="4" height="17" rx="0.800" fill="#a6a6a6" transform="rotate(90 218 9)"/><rect x="216" y="0.5" width="4" height="17" rx="0.800" fill="#a6a6a6" transform="rotate(135 218 9)"/><circle cx="218" cy="9" r="6" fill="#a6a6a6"/><circle cx="218" cy="9" r="2.600" fill="#fff"/><rect x="477" y="0.5" width="4" height="17" rx="0.800" fill="#a6a6a6" transform="rotate(0 479 9)"/><rect x="477" y="0.5" width="4" height="17" rx="0.800" fill="#a6a6a6" transform="rotate(45 479 9)"/><rect x="477" y="0.5" width="4" height="17" rx="0.800" fill="#a6a6a6" transform="rotate(90 479 9)"/><rect x="477" y="0.5" width="4" height="17" rx="0.800" fill="#a6a6a6" transform="rotate(135 479 9)"/><circle cx="479" cy="9" r="6" fill="#a6a6a6"/><circle cx="479" cy="9" r="2.600" fill="#fff"/><circle cx="498" cy="9.5" r="5" fill="#c0c0c0"/><path d="M495 9.5h6" stroke="#fff" stroke-width="1.800"/></svg>
<div class="t" style="left:144px;top:100px;font-size:11px;color:#a0a0a0;letter-spacing:-0.2px;">CPU</div>
<div class="t" style="left:197px;top:100px;font-size:11px;color:#a0a0a0;letter-spacing:-0.2px;">Ctrl</div>
<div class="t" style="left:245px;top:100px;font-size:11px;color:#a0a0a0;letter-spacing:-0.2px;">HMI</div>
<div class="t" style="left:294px;top:100px;font-size:11px;color:#a0a0a0;letter-spacing:-0.2px;">Event Field</div>
<div class="t" style="left:574px;top:100px;font-size:11px;color:#a0a0a0;letter-spacing:-0.2px;">SystemState</div>
<div style="left:803px;top:98px;width:17px;height:953px;background:#f0f0f0;border-left:1px solid #a8a8a8;"></div>
<svg style="left:803px;top:98px;" width="17" height="953" viewBox="0 0 17 953"><path d="M3.500 12l5-5.500 5 5.500z" fill="#a6a6a6"/><path d="M3.500 941.500l5 5.500 5-5.500z" fill="#a0a0a0"/><rect x="2" y="194" width="14" height="9" fill="#c1c1c1"/></svg>
<div style="left:827px;top:53px;width:145px;height:20px;background:#4d6082;"></div>
<div class="t" style="left:847px;top:56px;font-size:12px;color:#fff;letter-spacing:-0.3px;">CPU Load Graphs</div>
<svg style="left:955px;top:57px;" width="12" height="12" viewBox="0 0 12 12"><path d="M2 2l8 8M10 2l-8 8" stroke="#d0d6e6" stroke-width="1.300" fill="none"/></svg>
<div style="left:827px;top:72px;width:787px;height:2px;background:#4d6082;"></div>
<svg style="left:1598px;top:61px;" width="12" height="8" viewBox="0 0 12 8"><path d="M2 2h8l-4 4z" fill="#d6dbe9"/></svg>
<div style="left:827px;top:74px;width:786px;height:24px;background:#d6dbe9;"></div>
<svg style="left:826.5px;top:74px;" width="300" height="24" viewBox="0 0 300 24"><circle cx="20" cy="11" r="5.500" fill="#fff" stroke="#0f5c8c" stroke-width="2"/><path d="M24.4 15.4l4 4" stroke="#0f5c8c" stroke-width="2.300" stroke-linecap="round"/><path d="M16.8 11h6.400M20 7.8v6.400" stroke="#000" stroke-width="2"/><circle cx="48" cy="11" r="5.500" fill="#fff" stroke="#0f5c8c" stroke-width="2"/><path d="M52.4 15.4l4 4" stroke="#0f5c8c" stroke-width="2.300" stroke-linecap="round"/><path d="M44.8 11h6.400" stroke="#000" stroke-width="2"/><rect x="190" y="4" width="16" height="16" rx="1.500" fill="#1a6a98"/><path d="M194.5 17h-1.500v-9h10v9h-1.500" stroke="#fff" stroke-width="1.800" fill="none"/><circle cx="198" cy="12.5" r="2.700" fill="#1a6a98" stroke="#fff" stroke-width="2.100"/></svg>
<div style="left:891px;top:75px;width:109px;height:22px;background:#fff;"></div>
<div style="left:1000px;top:75px;width:11px;height:22px;background:#e9edfb;"></div>
<svg style="left:1000px;top:75px;" width="11" height="22" viewBox="0 0 11 22"><path d="M2.500 10h6l-3 3.500z" fill="#000"/></svg>
<div class="t" style="left:894px;top:79px;font-size:12px;color:#000;letter-spacing:-0.3px;">10.000.000</div>
<div class="t" style="left:1036px;top:79px;font-size:12px;color:#1b1b2b;letter-spacing:-0.1px;">Sync</div>
<div class="t" style="left:1082px;top:79px;font-size:12px;color:#1b1b2b;letter-spacing:-0.1px;">View</div>
<div class="t" style="left:1126px;top:79px;font-size:12px;color:#1b1b2b;letter-spacing:-0.1px;">Resolution</div>
<div style="left:1193px;top:75px;width:109px;height:22px;background:#fff;"></div>
<div style="left:1302px;top:75px;width:11px;height:22px;background:#e9edfb;"></div>
<svg style="left:1302px;top:75px;" width="11" height="22" viewBox="0 0 11 22"><path d="M2.500 10h6l-3 3.500z" fill="#000"/></svg>
<div class="t" style="left:1197px;top:79px;font-size:12px;color:#000;letter-spacing:-0.1px;">CPU Load Graph</div>
<div style="left:828px;top:98px;width:785px;height:290px;background:#fff;"></div>
<svg style="left:828px;top:98px;" width="785" height="290" viewBox="0 0 785 290"><defs><linearGradient id="cy" x1="0" y1="0" x2="1" y2="0"><stop offset="0" stop-color="#ffff00"/><stop offset="1" stop-color="#dede00"/></linearGradient><linearGradient id="cg" x1="0" y1="0" x2="1" y2="0"><stop offset="0" stop-color="#007d00"/><stop offset="1" stop-color="#006c00"/></linearGradient><linearGradient id="cr" x1="0" y1="0" x2="1" y2="0"><stop offset="0" stop-color="#ff0000"/><stop offset="1" stop-color="#e00000"/></linearGradient></defs><path d="M75 38.6h587" stroke="#c0c0c0" stroke-width="1"/><path d="M75 62.2h587" stroke="#c0c0c0" stroke-width="1"/><path d="M75 85.8h587" stroke="#c0c0c0" stroke-width="1"/><path d="M75 109.4h587" stroke="#c0c0c0" stroke-width="1"/><path d="M75 133.0h587" stroke="#c0c0c0" stroke-width="1"/><path d="M75 156.6h587" stroke="#c0c0c0" stroke-width="1"/><path d="M75 180.2h587" stroke="#c0c0c0" stroke-width="1"/><path d="M75 203.8h587" stroke="#c0c0c0" stroke-width="1"/><path d="M75 227.4h587" stroke="#c0c0c0" stroke-width="1"/><path d="M145.5 15V262" stroke="#b0b0b0" stroke-width="1"/><path d="M439.5 15V262" stroke="#b0b0b0" stroke-width="1"/><rect x="75.20" y="159.0" width="10.74" height="6.4" fill="url(#cg)"/><rect x="75.20" y="164.9" width="10.74" height="80.7" fill="url(#cy)"/><rect x="75.20" y="245.1" width="10.74" height="5.9" fill="url(#cr)"/><rect x="86.94" y="159.0" width="10.74" height="6.4" fill="url(#cg)"/><rect x="86.94" y="164.9" width="10.74" height="80.7" fill="url(#cy)"/><rect x="86.94" y="245.1" width="10.74" height="5.9" fill="url(#cr)"/><rect x="98.68" y="196.7" width="10.74" height="6.4" fill="url(#cg)"/><rect x="98.68" y="202.6" width="10.74" height="43.0" fill="url(#cy)"/><rect x="98.68" y="245.1" width="10.74" height="5.9" fill="url(#cr)"/><rect x="110.42" y="193.9" width="10.74" height="6.4" fill="url(#cg)"/><rect x="110.42" y="199.8" width="10.74" height="45.8" fill="url(#cy)"/><rect x="110.42" y="245.1" width="10.74" height="5.9" fill="url(#cr)"/><rect x="122.16" y="196.7" width="10.74" height="6.4" fill="url(#cg)"/><rect x="122.16" y="202.6" width="10.74" height="43.0" fill="url(#cy)"/><rect x="122.16" y="245.1" width="10.74" height="5.9" fill="url(#cr)"/><rect x="133.90" y="193.9" width="10.74" height="6.4" fill="url(#cg)"/><rect x="133.90" y="199.8" width="10.74" height="45.8" fill="url(#cy)"/><rect x="133.90" y="245.1" width="10.74" height="5.9" fill="url(#cr)"/><rect x="145.64" y="196.7" width="10.74" height="6.4" fill="url(#cg)"/><rect x="145.64" y="202.6" width="10.74" height="43.0" fill="url(#cy)"/><rect x="145.64" y="245.1" width="10.74" height="5.9" fill="url(#cr)"/><rect x="157.38" y="193.9" width="10.74" height="6.4" fill="url(#cg)"/><rect x="157.38" y="199.8" width="10.74" height="45.8" fill="url(#cy)"/><rect x="157.38" y="245.1" width="10.74" height="5.9" fill="url(#cr)"/><rect x="169.12" y="196.7" width="10.74" height="6.4" fill="url(#cg)"/><rect x="169.12" y="202.6" width="10.74" height="43.0" fill="url(#cy)"/><rect x="169.12" y="245.1" width="10.74" height="5.9" fill="url(#cr)"/><rect x="180.86" y="193.9" width="10.74" height="6.4" fill="url(#cg)"/><rect x="180.86" y="199.8" width="10.74" height="45.8" fill="url(#cy)"/><rect x="180.86" y="245.1" width="10.74" height="5.9" fill="url(#cr)"/><rect x="192.60" y="196.7" width="10.74" height="6.4" fill="url(#cg)"/><rect x="192.60" y="202.6" width="10.74" height="43.0" fill="url(#cy)"/><rect x="192.60" y="245.1" width="10.74" height="5.9" fill="url(#cr)"/><rect x="204.34" y="193.9" width="10.74" height="6.4" fill="url(#cg)"/><rect x="204.34" y="199.8" width="10.74" height="45.8" fill="url(#cy)"/><rect x="204.34" y="245.1" width="10.74" height="5.9" fill="url(#cr)"/><rect x="216.08" y="196.7" width="10.74" height="6.4" fill="url(#cg)"/><rect x="216.08" y="202.6" width="10.74" height="43.0" fill="url(#cy)"/><rect x="216.08" y="245.1" width="10.74" height="5.9" fill="url(#cr)"/><rect x="227.82" y="193.9" width="10.74" height="6.4" fill="url(#cg)"/><rect x="227.82" y="199.8" width="10.74" height="45.8" fill="url(#cy)"/><rect x="227.82" y="245.1" width="10.74" height="5.9" fill="url(#cr)"/><rect x="239.56" y="196.7" width="10.74" height="6.4" fill="url(#cg)"/><rect x="239.56" y="202.6" width="10.74" height="43.0" fill="url(#cy)"/><rect x="239.56" y="245.1" width="10.74" height="5.9" fill="url(#cr)"/><rect x="251.30" y="222.0" width="10.74" height="6.4" fill="url(#cg)"/><rect x="251.30" y="227.9" width="10.74" height="21.3" fill="url(#cy)"/><rect x="251.30" y="248.6" width="10.74" height="2.4" fill="url(#cr)"/><rect x="263.04" y="245.1" width="10.74" height="5.9" fill="url(#cg)"/><rect x="263.04" y="244.1" width="10.74" height="1.300" fill="#1818e0"/><rect x="274.78" y="245.1" width="10.74" height="5.9" fill="url(#cg)"/><rect x="274.78" y="244.1" width="10.74" height="1.300" fill="#1818e0"/><rect x="286.52" y="245.1" width="10.74" height="5.9" fill="url(#cg)"/><rect x="286.52" y="244.1" width="10.74" height="1.300" fill="#1818e0"/><rect x="298.26" y="245.1" width="10.74" height="5.9" fill="url(#cg)"/><rect x="298.26" y="244.1" width="10.74" height="1.300" fill="#1818e0"/><rect x="310.00" y="245.1" width="10.74" height="5.9" fill="url(#cg)"/><rect x="310.00" y="244.1" width="10.74" height="1.300" fill="#1818e0"/><rect x="321.74" y="245.1" width="10.74" height="5.9" fill="url(#cg)"/><rect x="321.74" y="244.1" width="10.74" height="1.300" fill="#1818e0"/><rect x="333.48" y="245.1" width="10.74" height="5.9" fill="url(#cg)"/><rect x="333.48" y="244.1" width="10.74" height="1.300" fill="#1818e0"/><rect x="345.22" y="245.1" width="10.74" height="5.9" fill="url(#cg)"/><rect x="345.22" y="244.1" width="10.74" height="1.300" fill="#1818e0"/><rect x="356.96" y="15.0" width="10.74" height="236.0" fill="url(#cg)"/><rect x="368.70" y="15.0" width="10.74" height="236.0" fill="url(#cg)"/><rect x="380.44" y="133.0" width="10.74" height="118.0" fill="url(#cg)"/><rect x="392.18" y="196.7" width="10.74" height="6.4" fill="url(#cg)"/><rect x="392.18" y="202.6" width="10.74" height="46.5" fill="url(#cy)"/><rect x="392.18" y="248.6" width="10.74" height="2.4" fill="url(#cr)"/><rect x="403.92" y="159.0" width="10.74" height="6.4" fill="url(#cg)"/><rect x="403.92" y="164.9" width="10.74" height="81.2" fill="url(#cy)"/><rect x="403.92" y="245.6" width="10.74" height="5.4" fill="url(#cr)"/><rect x="415.66" y="212.1" width="10.74" height="6.4" fill="url(#cg)"/><rect x="415.66" y="218.0" width="10.74" height="31.2" fill="url(#cy)"/><rect x="415.66" y="248.6" width="10.74" height="2.4" fill="url(#cr)"/><rect x="427.40" y="245.1" width="10.74" height="5.9" fill="url(#cg)"/><rect x="427.40" y="244.1" width="10.74" height="1.300" fill="#1818e0"/><rect x="439.14" y="245.1" width="10.74" height="5.9" fill="url(#cg)"/><rect x="439.14" y="244.1" width="10.74" height="1.300" fill="#1818e0"/><rect x="450.88" y="245.1" width="10.74" height="5.9" fill="url(#cg)"/><rect x="450.88" y="244.1" width="10.74" height="1.300" fill="#1818e0"/><rect x="462.62" y="245.1" width="10.74" height="5.9" fill="url(#cg)"/><rect x="462.62" y="244.1" width="10.74" height="1.300" fill="#1818e0"/><rect x="474.36" y="245.1" width="10.74" height="5.9" fill="url(#cg)"/><rect x="474.36" y="244.1" width="10.74" height="1.300" fill="#1818e0"/><rect x="486.10" y="245.1" width="10.74" height="5.9" fill="url(#cg)"/><rect x="486.10" y="244.1" width="10.74" height="1.300" fill="#1818e0"/><rect x="497.84" y="245.1" width="10.74" height="5.9" fill="url(#cg)"/><rect x="497.84" y="244.1" width="10.74" height="1.300" fill="#1818e0"/><rect x="509.58" y="245.1" width="10.74" height="5.9" fill="url(#cg)"/><rect x="509.58" y="244.1" width="10.74" height="1.300" fill="#1818e0"/><rect x="521.32" y="162.0" width="10.74" height="6.4" fill="url(#cg)"/><rect x="521.32" y="167.9" width="10.74" height="77.7" fill="url(#cy)"/><rect x="521.32" y="245.1" width="10.74" height="5.9" fill="url(#cr)"/><rect x="521.32" y="161.0" width="10.74" height="1.300" fill="#1818e0"/><rect x="533.06" y="159.0" width="10.74" height="6.4" fill="url(#cg)"/><rect x="533.06" y="164.9" width="10.74" height="80.7" fill="url(#cy)"/><rect x="533.06" y="245.1" width="10.74" height="5.9" fill="url(#cr)"/><rect x="544.80" y="173.1" width="10.74" height="6.4" fill="url(#cg)"/><rect x="544.80" y="179.0" width="10.74" height="66.6" fill="url(#cy)"/><rect x="544.80" y="245.1" width="10.74" height="5.9" fill="url(#cr)"/><rect x="544.80" y="172.1" width="10.74" height="1.300" fill="#1818e0"/><rect x="556.54" y="196.7" width="10.74" height="6.4" fill="url(#cg)"/><rect x="556.54" y="202.6" width="10.74" height="43.0" fill="url(#cy)"/><rect x="556.54" y="245.1" width="10.74" height="5.9" fill="url(#cr)"/><rect x="568.28" y="193.9" width="10.74" height="6.4" fill="url(#cg)"/><rect x="568.28" y="199.8" width="10.74" height="45.8" fill="url(#cy)"/><rect x="568.28" y="245.1" width="10.74" height="5.9" fill="url(#cr)"/><rect x="568.28" y="192.9" width="10.74" height="1.300" fill="#1818e0"/><rect x="580.02" y="196.7" width="10.74" height="6.4" fill="url(#cg)"/><rect x="580.02" y="202.6" width="10.74" height="43.0" fill="url(#cy)"/><rect x="580.02" y="245.1" width="10.74" height="5.9" fill="url(#cr)"/><rect x="591.76" y="193.9" width="10.74" height="6.4" fill="url(#cg)"/><rect x="591.76" y="199.8" width="10.74" height="45.8" fill="url(#cy)"/><rect x="591.76" y="245.1" width="10.74" height="5.9" fill="url(#cr)"/><rect x="591.76" y="192.9" width="10.74" height="1.300" fill="#1818e0"/><rect x="603.50" y="196.7" width="10.74" height="6.4" fill="url(#cg)"/><rect x="603.50" y="202.6" width="10.74" height="43.0" fill="url(#cy)"/><rect x="603.50" y="245.1" width="10.74" height="5.9" fill="url(#cr)"/><rect x="615.24" y="193.9" width="10.74" height="6.4" fill="url(#cg)"/><rect x="615.24" y="199.8" width="10.74" height="45.8" fill="url(#cy)"/><rect x="615.24" y="245.1" width="10.74" height="5.9" fill="url(#cr)"/><rect x="615.24" y="192.9" width="10.74" height="1.300" fill="#1818e0"/><rect x="626.98" y="196.7" width="10.74" height="6.4" fill="url(#cg)"/><rect x="626.98" y="202.6" width="10.74" height="43.0" fill="url(#cy)"/><rect x="626.98" y="245.1" width="10.74" height="5.9" fill="url(#cr)"/><rect x="638.72" y="193.9" width="10.74" height="6.4" fill="url(#cg)"/><rect x="638.72" y="199.8" width="10.74" height="45.8" fill="url(#cy)"/><rect x="638.72" y="245.1" width="10.74" height="5.9" fill="url(#cr)"/><rect x="638.72" y="192.9" width="10.74" height="1.300" fill="#1818e0"/><rect x="650.46" y="196.7" width="10.74" height="6.4" fill="url(#cg)"/><rect x="650.46" y="202.6" width="10.74" height="43.0" fill="url(#cy)"/><rect x="650.46" y="245.1" width="10.74" height="5.9" fill="url(#cr)"/><rect x="75.5" y="15.5" width="587" height="236" fill="none" stroke="#000" stroke-width="1.300"/></svg>
<div class="t" style="left:833px;top:107px;width:60px;text-align:right;font-size:11px;letter-spacing:-0.2px">100 %</div>
<div class="t" style="left:833px;top:131px;width:60px;text-align:right;font-size:11px;letter-spacing:-0.2px">90 %</div>
<div class="t" style="left:833px;top:154px;width:60px;text-align:right;font-size:11px;letter-spacing:-0.2px">80 %</div>
<div class="t" style="left:833px;top:178px;width:60px;text-align:right;font-size:11px;letter-spacing:-0.2px">70 %</div>
<div class="t" style="left:833px;top:201px;width:60px;text-align:right;font-size:11px;letter-spacing:-0.2px">60 %</div>
<div class="t" style="left:833px;top:225px;width:60px;text-align:right;font-size:11px;letter-spacing:-0.2px">50 %</div>
<div class="t" style="left:833px;top:249px;width:60px;text-align:right;font-size:11px;letter-spacing:-0.2px">40 %</div>
<div class="t" style="left:833px;top:272px;width:60px;text-align:right;font-size:11px;letter-spacing:-0.2px">30 %</div>
<div class="t" style="left:833px;top:296px;width:60px;text-align:right;font-size:11px;letter-spacing:-0.2px">20 %</div>
<div class="t" style="left:833px;top:319px;width:60px;text-align:right;font-size:11px;letter-spacing:-0.2px">10 %</div>
<div class="t" style="left:833px;top:343px;width:60px;text-align:right;font-size:11px;letter-spacing:-0.2px">0 %</div>
<div class="t" style="left:980px;top:355px;font-size:11px;color:#000;letter-spacing:-0.1px;">40.000.000</div>
<div class="t" style="left:1274px;top:355px;font-size:11px;color:#000;letter-spacing:-0.1px;">45.000.000</div>
<div style="left:1518px;top:102px;width:13px;height:13px;background:#0000ff;border:1px solid #000;"></div>
<div class="t" style="left:1536px;top:102px;font-size:11px;color:#000;letter-spacing:-0.1px;">TzCtrl</div>
<div style="left:1518px;top:118px;width:13px;height:13px;background:#008000;border:1px solid #000;"></div>
<div class="t" style="left:1536px;top:118px;font-size:11px;color:#000;letter-spacing:-0.1px;">HMI</div>
<div style="left:1518px;top:134px;width:13px;height:13px;background:#ffff00;border:1px solid #000;"></div>
<div class="t" style="left:1536px;top:134px;font-size:11px;color:#000;letter-spacing:-0.1px;">Control</div>
<div style="left:1518px;top:150px;width:13px;height:13px;background:#ff0000;border:1px solid #000;"></div>
<div class="t" style="left:1536px;top:150px;font-size:11px;color:#000;letter-spacing:-0.1px;">Motor</div>
<div style="left:1518px;top:166px;width:13px;height:13px;background:#ff0000;border:1px solid #000;"></div>
<div class="t" style="left:1536px;top:166px;font-size:11px;color:#000;letter-spacing:-0.1px;">Pos_ADC_ISR</div>
<div style="left:828px;top:372px;width:682px;height:16px;background:#f0f0f0;"></div>
<div style="left:1079px;top:372px;width:60px;height:16px;background:#c1c1c1;"></div>
<svg style="left:828px;top:371px;" width="682" height="17" viewBox="0 0 682 17"><path d="M10.800 5l-5.200 3.500 5.200 3.500" stroke="#505050" stroke-width="2" fill="none"/><path d="M671.2 5l5.200 3.500-5.200 3.500" stroke="#505050" stroke-width="2" fill="none"/></svg>
<div style="left:1510px;top:98px;width:4px;height:290px;background:#f0f0f0;"></div>
<div style="left:827px;top:395px;width:201px;height:20px;background:#4d6082;"></div>
<div class="t" style="left:838px;top:398px;font-size:12px;color:#fff;letter-spacing:-0.3px;">No Sync - User Event Signal P...</div>
<svg style="left:1010px;top:399px;" width="12" height="12" viewBox="0 0 12 12"><path d="M2 2l8 8M10 2l-8 8" stroke="#d0d6e6" stroke-width="1.300" fill="none"/></svg>
<div style="left:827px;top:414px;width:787px;height:2px;background:#4d6082;"></div>
<svg style="left:1598px;top:403px;" width="12" height="8" viewBox="0 0 12 8"><path d="M2 2h8l-4 4z" fill="#d6dbe9"/></svg>
<div style="left:827px;top:416px;width:786px;height:24px;background:#d6dbe9;"></div>
<svg style="left:826.5px;top:416px;" width="300" height="24" viewBox="0 0 300 24"><circle cx="20" cy="11" r="5.500" fill="#fff" stroke="#0f5c8c" stroke-width="2"/><path d="M24.4 15.4l4 4" stroke="#0f5c8c" stroke-width="2.300" stroke-linecap="round"/><path d="M16.8 11h6.400M20 7.8v6.400" stroke="#000" stroke-width="2"/><circle cx="48" cy="11" r="5.500" fill="#fff" stroke="#0f5c8c" stroke-width="2"/><path d="M52.4 15.4l4 4" stroke="#0f5c8c" stroke-width="2.300" stroke-linecap="round"/><path d="M44.8 11h6.400" stroke="#000" stroke-width="2"/><rect x="190" y="4" width="16" height="16" rx="1.500" fill="#1a6a98"/><rect x="192.5" y="7" width="4.500" height="10.500" fill="#fff"/><rect x="199" y="9.5" width="4.500" height="8" fill="#fff"/></svg>
<div style="left:891px;top:417px;width:109px;height:22px;background:#fff;"></div>
<div style="left:1000px;top:417px;width:11px;height:22px;background:#e9edfb;"></div>
<svg style="left:1000px;top:417px;" width="11" height="22" viewBox="0 0 11 22"><path d="M2.500 10h6l-3 3.500z" fill="#000"/></svg>
<div class="t" style="left:894px;top:421px;font-size:12px;color:#000;letter-spacing:-0.3px;">10.000.000</div>
<div class="t" style="left:1036px;top:421px;font-size:12px;color:#1b1b2b;letter-spacing:-0.1px;">Sync</div>
<div class="t" style="left:1082px;top:421px;font-size:12px;color:#1b1b2b;letter-spacing:-0.1px;">View</div>
<div style="left:828px;top:440px;width:785px;height:276px;background:#fff;"></div>
<svg style="left:828px;top:440px;" width="785" height="276" viewBox="0 0 785 276"><path d="M75 48.8h587" stroke="#c0c0c0" stroke-width="1"/><path d="M75 82.6h587" stroke="#c0c0c0" stroke-width="1"/><path d="M75 116.4h587" stroke="#c0c0c0" stroke-width="1"/><path d="M75 150.2h587" stroke="#c0c0c0" stroke-width="1"/><path d="M75 184.0h587" stroke="#c0c0c0" stroke-width="1"/><path d="M75 217.8h587" stroke="#c0c0c0" stroke-width="1"/><path d="M145.5 15V248" stroke="#b0b0b0" stroke-width="1"/><path d="M439.5 15V248" stroke="#b0b0b0" stroke-width="1"/><path d="M75 223.5h587" stroke="#000" stroke-width="1" stroke-dasharray="3 2"/><path d="M75 230.5h587" stroke="#ee82ee" stroke-width="1.200"/><path d="M75 61.5H392.5V73.5H516.5V55.5H662" stroke="#ffa500" stroke-width="1.100" fill="none"/><polyline points="75.0,173.6 76.0,174.8 77.0,175.1 78.0,176.1 79.0,176.7 80.0,176.4 81.0,176.8 82.0,178.4 83.0,178.0 84.0,178.4 85.0,179.8 86.0,179.4 87.0,180.2 88.0,180.0 89.0,180.5 90.0,180.1 91.0,181.0 92.0,181.5 93.0,181.3 94.0,181.8 95.0,181.8 96.0,181.2 97.0,182.3 98.0,182.2 99.0,181.9 100.0,181.7 101.0,183.0 102.0,182.5 103.0,183.0 104.0,183.3 105.0,183.1 106.0,183.5 107.0,182.8 108.0,183.5 109.0,183.0 110.0,183.8 111.0,183.8 112.0,182.7 113.0,183.7 114.0,183.9 115.0,185.0 116.0,184.3 117.0,184.6 118.0,184.2 119.0,184.5 120.0,184.3 121.0,184.3 122.0,184.7 123.0,184.7 124.0,185.2 125.0,184.9 126.0,185.2 127.0,185.2 128.0,185.4 129.0,184.9 130.0,184.2 131.0,185.2 132.0,185.4 133.0,185.3 134.0,184.8 135.0,185.1 136.0,184.4 137.0,185.2 138.0,184.9 139.0,184.5 140.0,184.2 141.0,185.3 142.0,185.5 143.0,184.2 144.0,185.2 145.0,184.7 146.0,184.3 147.0,184.6 148.0,185.2 149.0,185.4 150.0,184.2 151.0,185.0 152.0,184.2 153.0,185.2 154.0,184.6 155.0,185.4 156.0,185.5 157.0,184.9 158.0,185.6 159.0,184.6 160.0,184.3 161.0,185.0 162.0,184.2 163.0,184.5 164.0,184.8 165.0,185.0 166.0,184.4 167.0,184.2 168.0,185.4 169.0,184.6 170.0,185.5 171.0,185.4 172.0,184.7 173.0,184.8 174.0,184.9 175.0,185.1 176.0,185.0 177.0,185.0 178.0,185.1 179.0,185.5 180.0,184.9 181.0,184.8 182.0,185.2 183.0,184.5 184.0,184.6 185.0,185.6 186.0,184.9 187.0,185.0 188.0,184.2 189.0,184.8 190.0,185.0 191.0,184.2 192.0,185.1 193.0,185.1 194.0,184.3 195.0,185.1 196.0,184.9 197.0,185.1 198.0,184.7 199.0,185.2 200.0,185.2 201.0,184.2 202.0,184.3 203.0,185.1 204.0,185.5 205.0,184.6 206.0,184.8 207.0,185.0 208.0,184.6 209.0,184.7 210.0,184.6 211.0,184.7 212.0,185.0 213.0,184.6 214.0,184.7 215.0,185.3 216.0,184.2 217.0,185.0 218.0,185.2 219.0,184.6 220.0,184.5 221.0,185.3 222.0,184.5 223.0,184.5 224.0,184.8 225.0,185.2 226.0,184.3 227.0,184.7 228.0,184.7 229.0,185.4 230.0,184.8 231.0,185.4 232.0,184.4 233.0,184.7 234.0,185.1 235.0,185.4 236.0,184.8 237.0,184.5 238.0,184.4 239.0,184.9 240.0,184.5 241.0,185.3 242.0,184.5 243.0,183.6 244.0,183.7 245.0,184.4 246.0,184.2 247.0,184.0 248.0,184.0 249.0,184.0 250.0,184.0 251.0,184.0 252.0,184.0 253.0,184.0 254.0,184.0 255.0,184.0 256.0,184.0 257.0,184.0 258.0,184.0 259.0,184.0 260.0,184.0 261.0,184.0 262.0,184.0 263.0,184.0 264.0,184.0 265.0,184.0 266.0,184.0 267.0,184.0 268.0,184.0 269.0,184.0 270.0,184.0 271.0,184.0 272.0,184.0 273.0,184.0 274.0,184.0 275.0,184.0 276.0,184.0 277.0,184.0 278.0,184.0 279.0,184.0 280.0,184.0 281.0,184.0 282.0,184.0 283.0,184.0 284.0,184.0 285.0,184.0 286.0,184.0 287.0,184.0 288.0,184.0 289.0,184.0 290.0,184.0 291.0,184.0 292.0,184.0 293.0,184.0 294.0,184.0 295.0,184.0 296.0,184.0 297.0,184.0 298.0,184.0 299.0,184.0 300.0,184.0 301.0,184.0 302.0,184.0 303.0,184.0 304.0,184.0 305.0,184.0 306.0,184.0 307.0,184.0 308.0,184.0 309.0,184.0 310.0,184.0 311.0,184.0 312.0,184.0 313.0,184.0 314.0,184.0 315.0,184.0 316.0,184.0 317.0,184.0 318.0,184.0 319.0,184.0 320.0,184.0 321.0,184.0 322.0,184.0 323.0,184.0 324.0,184.0 325.0,184.0 326.0,184.0 327.0,184.0 328.0,184.0 329.0,184.0 330.0,184.0 331.0,184.0 332.0,184.0 333.0,184.0 334.0,184.0 335.0,184.0 336.0,184.0 337.0,184.0 338.0,184.0 339.0,184.0 340.0,184.0 341.0,184.0 342.0,184.0 343.0,184.0 344.0,184.0 345.0,184.0 346.0,184.0 347.0,184.0 348.0,184.0 349.0,184.0 350.0,184.0 351.0,184.0 352.0,184.0 353.0,184.0 354.0,184.0 355.0,184.0 356.0,184.0 357.0,184.0 358.0,184.0 359.0,184.0 360.0,184.0 361.0,184.0 362.0,184.0 363.0,184.0 364.0,184.0 365.0,184.0 366.0,184.0 367.0,184.0 368.0,184.0 369.0,184.0 370.0,184.0 371.0,184.0 372.0,184.0 373.0,184.0 374.0,184.0 375.0,184.0 376.0,184.0 377.0,184.0 378.0,184.0 379.0,184.0 380.0,184.0 381.0,184.0 382.0,184.0 383.0,184.0 384.0,184.0 385.0,184.0 386.0,184.0 387.0,184.0 388.0,184.0 389.0,184.0 390.0,184.0 391.0,184.0 392.0,184.0 393.0,184.0 394.0,184.0 395.0,184.0 396.0,184.0 397.0,184.0 398.0,191.5 399.0,191.5 400.0,191.7 401.0,191.0 402.0,190.6 403.0,190.6 404.0,191.0 405.0,190.2 406.0,190.2 407.0,190.1 408.0,189.9 409.0,189.7 410.0,190.2 411.0,189.1 412.0,188.8 413.0,189.7 414.0,189.5 415.0,189.4 416.0,188.6 417.0,189.1 418.0,188.9 419.0,187.9 420.0,188.3 421.0,188.3 422.0,184.0 423.0,184.0 424.0,184.0 425.0,184.0 426.0,184.0 427.0,184.0 428.0,184.0 429.0,184.0 430.0,184.0 431.0,184.0 432.0,184.0 433.0,184.0 434.0,184.0 435.0,184.0 436.0,184.0 437.0,184.0 438.0,184.0 439.0,184.0 440.0,184.0 441.0,184.0 442.0,184.0 443.0,184.0 444.0,184.0 445.0,184.0 446.0,184.0 447.0,184.0 448.0,184.0 449.0,184.0 450.0,184.0 451.0,184.0 452.0,184.0 453.0,184.0 454.0,184.0 455.0,184.0 456.0,184.0 457.0,184.0 458.0,184.0 459.0,184.0 460.0,184.0 461.0,184.0 462.0,184.0 463.0,184.0 464.0,184.0 465.0,184.0 466.0,184.0 467.0,184.0 468.0,184.0 469.0,184.0 470.0,184.0 471.0,184.0 472.0,184.0 473.0,184.0 474.0,184.0 475.0,184.0 476.0,184.0 477.0,184.0 478.0,184.0 479.0,184.0 480.0,184.0 481.0,184.0 482.0,184.0 483.0,184.0 484.0,184.0 485.0,184.0 486.0,184.0 487.0,184.0 488.0,184.0 489.0,184.0 490.0,184.0 491.0,184.0 492.0,184.0 493.0,184.0 494.0,184.0 495.0,184.0 496.0,184.0 497.0,184.0 498.0,184.0 499.0,184.0 500.0,184.0 501.0,184.0 502.0,184.0 503.0,184.0 504.0,184.0 505.0,184.0 506.0,184.0 507.0,184.0 508.0,184.0 509.0,184.0 510.0,184.0 511.0,184.0 512.0,184.0 513.0,184.0 514.0,184.0 515.0,184.0 516.0,184.0 517.0,184.0 518.0,184.0 519.0,184.0 520.0,184.0 521.0,184.0 522.0,184.0 523.0,176.0 524.0,176.2 525.0,176.5 526.0,176.6 527.0,177.1 528.0,177.4 529.0,177.5 530.0,178.6 531.0,178.5 532.0,179.6 533.0,178.8 534.0,180.3 535.0,180.2 536.0,180.8 537.0,181.0 538.0,181.2 539.0,181.0 540.0,180.4 541.0,181.6 542.0,180.9 543.0,181.3 544.0,181.9 545.0,181.9 546.0,181.9 547.0,182.7 548.0,182.4 549.0,182.1 550.0,182.1 551.0,183.0 552.0,182.6 553.0,183.1 554.0,182.6 555.0,182.4 556.0,183.0 557.0,183.4 558.0,182.6 559.0,183.5 560.0,183.7 561.0,183.6 562.0,183.7 563.0,182.6 564.0,183.5 565.0,183.9 566.0,182.8 567.0,183.1 568.0,184.0 569.0,184.4 570.0,184.2 571.0,184.3 572.0,184.8 573.0,183.7 574.0,183.8 575.0,183.9 576.0,184.0 577.0,183.9 578.0,185.2 579.0,185.0 580.0,184.0 581.0,184.6 582.0,184.3 583.0,184.3 584.0,184.4 585.0,184.8 586.0,184.8 587.0,184.4 588.0,184.2 589.0,184.4 590.0,184.1 591.0,184.8 592.0,185.0 593.0,184.5 594.0,184.1 595.0,184.3 596.0,184.5 597.0,184.9 598.0,185.1 599.0,184.6 600.0,185.2 601.0,184.9 602.0,184.6 603.0,184.6 604.0,184.7 605.0,185.0 606.0,184.6 607.0,185.0 608.0,184.7 609.0,184.4 610.0,184.8 611.0,185.0 612.0,184.2 613.0,184.7 614.0,184.7 615.0,185.3 616.0,185.4 617.0,184.6 618.0,185.3 619.0,185.2 620.0,184.4 621.0,184.7 622.0,184.3 623.0,185.2 624.0,185.0 625.0,185.3 626.0,185.2 627.0,185.0 628.0,185.1 629.0,184.9 630.0,184.2 631.0,184.9 632.0,184.1 633.0,184.3 634.0,185.2 635.0,184.2 636.0,184.2 637.0,184.2 638.0,185.3 639.0,184.3 640.0,184.1 641.0,185.3 642.0,184.3 643.0,185.3 644.0,185.0 645.0,185.3 646.0,185.4 647.0,184.9 648.0,185.2 649.0,184.1 650.0,185.2 651.0,184.8 652.0,185.1 653.0,184.2 654.0,185.1 655.0,185.4 656.0,184.2 657.0,184.6 658.0,184.9 659.0,185.3 660.0,184.4 661.0,184.4 662.0,184.4" stroke="#008000" stroke-width="1.100" fill="none"/><polyline points="75.0,80.6 76.0,79.8 77.0,78.4 78.0,77.5 79.0,76.6 80.0,75.6 81.0,74.8 82.0,73.6 83.0,73.2 84.0,72.9 85.0,71.5 86.0,71.1 87.0,69.8 88.0,69.6 89.0,68.9 90.0,68.1 91.0,67.3 92.0,66.6 93.0,66.2 94.0,65.8 95.0,64.5 96.0,63.9 97.0,64.0 98.0,63.6 99.0,62.7 100.0,62.2 101.0,62.0 102.0,61.0 103.0,60.7 104.0,60.2 105.0,60.2 106.0,59.6 107.0,59.1 108.0,59.3 109.0,59.2 110.0,58.3 111.0,58.4 112.0,57.8 113.0,58.0 114.0,57.5 115.0,57.0 116.0,56.8 117.0,56.4 118.0,56.7 119.0,56.5 120.0,56.1 121.0,56.2 122.0,56.1 123.0,56.5 124.0,55.8 125.0,56.6 126.0,56.0 127.0,56.1 128.0,56.0 129.0,56.5 130.0,56.6 131.0,56.3 132.0,56.3 133.0,56.8 134.0,57.1 135.0,56.5 136.0,57.1 137.0,57.5 138.0,57.0 139.0,56.7 140.0,56.8 141.0,57.6 142.0,57.6 143.0,58.1 144.0,58.1 145.0,57.3 146.0,57.3 147.0,57.5 148.0,57.5 149.0,58.3 150.0,58.6 151.0,58.7 152.0,57.9 153.0,58.8 154.0,58.1 155.0,58.3 156.0,58.8 157.0,58.0 158.0,58.0 159.0,59.1 160.0,58.4 161.0,58.6 162.0,59.0 163.0,59.2 164.0,58.3 165.0,58.8 166.0,59.0 167.0,59.1 168.0,58.8 169.0,59.4 170.0,59.9 171.0,59.2 172.0,59.4 173.0,58.9 174.0,59.2 175.0,59.8 176.0,59.0 177.0,60.1 178.0,60.2 179.0,59.1 180.0,60.3 181.0,59.6 182.0,60.2 183.0,60.2 184.0,59.6 185.0,60.2 186.0,60.2 187.0,60.4 188.0,59.7 189.0,60.4 190.0,60.7 191.0,60.4 192.0,60.2 193.0,59.6 194.0,60.2 195.0,60.0 196.0,60.6 197.0,60.5 198.0,60.4 199.0,59.9 200.0,60.6 201.0,60.6 202.0,60.0 203.0,61.0 204.0,60.7 205.0,60.0 206.0,61.1 207.0,60.0 208.0,60.3 209.0,60.9 210.0,60.7 211.0,60.7 212.0,60.8 213.0,60.6 214.0,60.4 215.0,60.2 216.0,60.1 217.0,61.0 218.0,61.1 219.0,60.8 220.0,61.1 221.0,60.6 222.0,60.5 223.0,60.7 224.0,61.4 225.0,60.2 226.0,60.9 227.0,60.5 228.0,61.3 229.0,60.7 230.0,60.7 231.0,60.8 232.0,61.0 233.0,61.3 234.0,60.8 235.0,61.5 236.0,60.4 237.0,60.7 238.0,60.5 239.0,60.5 240.0,61.4 241.0,61.4 242.0,60.6 243.0,60.6 244.0,61.0 245.0,61.4 246.0,61.5 247.0,61.4 248.0,61.2 249.0,60.6 250.0,61.0 251.0,60.7 252.0,61.5 253.0,61.5 254.0,61.5 255.0,61.5 256.0,61.5 257.0,61.5 258.0,61.5 259.0,61.5 260.0,61.5 261.0,61.5 262.0,61.5 263.0,61.5 264.0,61.5 265.0,61.5 266.0,61.5 267.0,61.5 268.0,61.5 269.0,61.5 270.0,61.5 271.0,61.5 272.0,61.5 273.0,61.5 274.0,61.5 275.0,61.5 276.0,61.5 277.0,61.5 278.0,61.5 279.0,61.5 280.0,61.5 281.0,61.5 282.0,61.5 283.0,61.5 284.0,61.5 285.0,61.5 286.0,61.5 287.0,61.5 288.0,61.5 289.0,61.5 290.0,61.5 291.0,61.5 292.0,61.5 293.0,61.5 294.0,61.5 295.0,61.5 296.0,61.5 297.0,61.5 298.0,61.5 299.0,61.5 300.0,61.5 301.0,61.5 302.0,61.5 303.0,61.5 304.0,61.5 305.0,61.5 306.0,61.5 307.0,61.5 308.0,61.5 309.0,61.5 310.0,61.5 311.0,61.5 312.0,61.5 313.0,61.5 314.0,61.5 315.0,61.5 316.0,61.5 317.0,61.5 318.0,61.5 319.0,61.5 320.0,61.5 321.0,61.5 322.0,61.5 323.0,61.5 324.0,61.5 325.0,61.5 326.0,61.5 327.0,61.5 328.0,61.5 329.0,61.5 330.0,61.5 331.0,61.5 332.0,61.5 333.0,61.5 334.0,61.5 335.0,61.5 336.0,61.5 337.0,61.5 338.0,61.5 339.0,61.5 340.0,61.5 341.0,61.5 342.0,61.5 343.0,61.5 344.0,61.5 345.0,61.5 346.0,61.5 347.0,61.5 348.0,61.5 349.0,61.5 350.0,61.5 351.0,61.5 352.0,61.5 353.0,61.5 354.0,61.5 355.0,61.5 356.0,61.5 357.0,61.5 358.0,61.5 359.0,61.5 360.0,61.5 361.0,61.5 362.0,61.5 363.0,61.5 364.0,61.5 365.0,61.5 366.0,61.5 367.0,61.5 368.0,61.5 369.0,61.5 370.0,61.5 371.0,61.5 372.0,61.5 373.0,61.5 374.0,61.5 375.0,61.5 376.0,61.5 377.0,61.5 378.0,61.5 379.0,61.5 380.0,61.5 381.0,61.5 382.0,61.5 383.0,61.5 384.0,61.5 385.0,61.5 386.0,61.5 387.0,61.5 388.0,61.5 389.0,61.5 390.0,61.5 391.0,61.5 392.0,61.5 393.0,61.5 394.0,61.5 395.0,61.5 396.0,61.5 397.0,61.5 398.0,61.5 399.0,61.5 400.0,61.6 401.0,61.4 402.0,61.8 403.0,62.7 404.0,62.4 405.0,63.7 406.0,64.4 407.0,65.1 408.0,65.2 409.0,66.1 410.0,66.8 411.0,67.6 412.0,68.7 413.0,69.2 414.0,69.5 415.0,70.7 416.0,71.0 417.0,71.7 418.0,72.4 419.0,72.1 420.0,73.3 421.0,73.4 422.0,73.4 423.0,73.5 424.0,73.5 425.0,73.5 426.0,73.5 427.0,73.5 428.0,73.5 429.0,73.5 430.0,73.5 431.0,73.5 432.0,73.5 433.0,73.5 434.0,73.5 435.0,73.5 436.0,73.5 437.0,73.5 438.0,73.5 439.0,73.5 440.0,73.5 441.0,73.5 442.0,73.5 443.0,73.5 444.0,73.5 445.0,73.5 446.0,73.5 447.0,73.5 448.0,73.5 449.0,73.5 450.0,73.5 451.0,73.5 452.0,73.5 453.0,73.5 454.0,73.5 455.0,73.5 456.0,73.5 457.0,73.5 458.0,73.5 459.0,73.5 460.0,73.5 461.0,73.5 462.0,73.5 463.0,73.5 464.0,73.5 465.0,73.5 466.0,73.5 467.0,73.5 468.0,73.5 469.0,73.5 470.0,73.5 471.0,73.5 472.0,73.5 473.0,73.5 474.0,73.5 475.0,73.5 476.0,73.5 477.0,73.5 478.0,73.5 479.0,73.5 480.0,73.5 481.0,73.5 482.0,73.5 483.0,73.5 484.0,73.5 485.0,73.5 486.0,73.5 487.0,73.5 488.0,73.5 489.0,73.5 490.0,73.5 491.0,73.5 492.0,73.5 493.0,73.5 494.0,73.5 495.0,73.5 496.0,73.5 497.0,73.5 498.0,73.5 499.0,73.5 500.0,73.5 501.0,73.5 502.0,73.5 503.0,73.5 504.0,73.5 505.0,73.5 506.0,73.5 507.0,73.5 508.0,73.5 509.0,73.5 510.0,73.5 511.0,73.5 512.0,73.5 513.0,73.5 514.0,73.5 515.0,73.5 516.0,73.5 517.0,73.5 518.0,73.5 519.0,73.5 520.0,73.5 521.0,73.5 522.0,73.5 523.0,73.5 524.0,73.5 525.0,72.5 526.0,71.3 527.0,70.6 528.0,69.3 529.0,68.8 530.0,68.1 531.0,67.1 532.0,66.4 533.0,66.0 534.0,65.2 535.0,63.8 536.0,63.7 537.0,62.9 538.0,61.8 539.0,61.4 540.0,60.7 541.0,60.0 542.0,59.8 543.0,59.6 544.0,58.6 545.0,58.6 546.0,58.0 547.0,57.1 548.0,57.3 549.0,56.7 550.0,56.6 551.0,56.1 552.0,55.9 553.0,55.2 554.0,55.4 555.0,55.2 556.0,54.9 557.0,54.4 558.0,54.5 559.0,54.1 560.0,53.7 561.0,53.5 562.0,53.4 563.0,53.4 564.0,53.3 565.0,53.6 566.0,53.7 567.0,53.5 568.0,53.4 569.0,53.8 570.0,53.3 571.0,53.6 572.0,54.1 573.0,53.5 574.0,53.2 575.0,54.4 576.0,54.1 577.0,53.6 578.0,53.6 579.0,53.9 580.0,54.0 581.0,53.5 582.0,53.1 583.0,53.5 584.0,54.4 585.0,53.4 586.0,54.0 587.0,53.6 588.0,53.6 589.0,53.6 590.0,54.0 591.0,53.6 592.0,53.4 593.0,53.6 594.0,53.7 595.0,54.2 596.0,53.6 597.0,53.5 598.0,54.2 599.0,54.2 600.0,54.7 601.0,53.6 602.0,54.2 603.0,54.2 604.0,53.6 605.0,55.2 606.0,54.0 607.0,53.8 608.0,54.4 609.0,53.9 610.0,54.7 611.0,54.2 612.0,53.9 613.0,53.8 614.0,54.9 615.0,54.2 616.0,55.0 617.0,54.5 618.0,55.3 619.0,54.3 620.0,54.2 621.0,54.2 622.0,55.1 623.0,54.8 624.0,54.4 625.0,54.0 626.0,54.9 627.0,55.4 628.0,54.8 629.0,53.9 630.0,53.9 631.0,54.0 632.0,54.2 633.0,54.0 634.0,54.0 635.0,55.0 636.0,55.4 637.0,54.3 638.0,55.5 639.0,54.7 640.0,55.2 641.0,55.4 642.0,55.5 643.0,54.0 644.0,54.5 645.0,55.0 646.0,55.5 647.0,54.1 648.0,54.5 649.0,55.4 650.0,54.2 651.0,54.6 652.0,54.6 653.0,55.1 654.0,55.5 655.0,54.3 656.0,55.2 657.0,55.2 658.0,55.4 659.0,54.9 660.0,55.5 661.0,54.6 662.0,54.7" stroke="#0000e8" stroke-width="1.200" fill="none"/><rect x="75.5" y="15.5" width="587" height="222" fill="none" stroke="#000" stroke-width="1.300"/></svg>
<div class="t" style="left:833px;top:449px;width:63px;text-align:right;font-size:11px;letter-spacing:-0.2px">500</div>
<div class="t" style="left:833px;top:483px;width:63px;text-align:right;font-size:11px;letter-spacing:-0.2px">400</div>
<div class="t" style="left:833px;top:517px;width:63px;text-align:right;font-size:11px;letter-spacing:-0.2px">300</div>
<div class="t" style="left:833px;top:550px;width:63px;text-align:right;font-size:11px;letter-spacing:-0.2px">200</div>
<div class="t" style="left:833px;top:584px;width:63px;text-align:right;font-size:11px;letter-spacing:-0.2px">100</div>
<div class="t" style="left:833px;top:618px;width:63px;text-align:right;font-size:11px;letter-spacing:-0.2px">0</div>
<div class="t" style="left:833px;top:652px;width:63px;text-align:right;font-size:11px;letter-spacing:-0.2px">-100</div>
<div class="t" style="left:833px;top:665px;width:66px;text-align:right;font-size:11px;letter-spacing:-0.2px">No Value</div>
<div class="t" style="left:980px;top:683px;font-size:11px;color:#000;letter-spacing:-0.1px;">40.000.000</div>
<div class="t" style="left:1274px;top:683px;font-size:11px;color:#000;letter-spacing:-0.1px;">45.000.000</div>
<div style="left:1518px;top:444px;width:13px;height:13px;background:#ff0000;border:1px solid #000;"></div>
<div class="t" style="left:1536px;top:444px;font-size:11px;color:#000;letter-spacing:-0.1px;">Messages</div>
<div style="left:1518px;top:460px;width:13px;height:13px;background:#008000;border:1px solid #000;"></div>
<div class="t" style="left:1536px;top:460px;font-size:11px;color:#000;letter-spacing:-0.1px;">Motor PWM</div>
<div style="left:1518px;top:476px;width:13px;height:13px;background:#0000ff;border:1px solid #000;"></div>
<div class="t" style="left:1536px;top:476px;font-size:11px;color:#000;letter-spacing:-0.1px;">Pos (LP)</div>
<div style="left:1518px;top:492px;width:13px;height:13px;background:#ee82ee;border:1px solid #000;"></div>
<div class="t" style="left:1536px;top:492px;font-size:11px;color:#000;letter-spacing:-0.1px;">SystemState</div>
<div style="left:1518px;top:508px;width:13px;height:13px;background:#ffa500;border:1px solid #000;"></div>
<div class="t" style="left:1536px;top:508px;font-size:11px;color:#000;letter-spacing:-0.1px;">Target pos</div>
<div style="left:828px;top:700px;width:682px;height:16px;background:#f0f0f0;"></div>
<div style="left:1079px;top:700px;width:60px;height:16px;background:#c1c1c1;"></div>
<svg style="left:828px;top:699px;" width="682" height="17" viewBox="0 0 682 17"><path d="M10.800 5l-5.200 3.500 5.200 3.500" stroke="#505050" stroke-width="2" fill="none"/><path d="M671.2 5l5.200 3.500-5.200 3.500" stroke="#505050" stroke-width="2" fill="none"/></svg>
<div style="left:1510px;top:440px;width:4px;height:276px;background:#f0f0f0;"></div>
<div style="left:827px;top:723px;width:173px;height:20px;background:#4d6082;"></div>
<div class="t" style="left:849px;top:726px;font-size:12px;color:#fff;letter-spacing:-0.3px;">State Machines Graph</div>
<svg style="left:983px;top:727px;" width="12" height="12" viewBox="0 0 12 12"><path d="M2 2l8 8M10 2l-8 8" stroke="#d0d6e6" stroke-width="1.300" fill="none"/></svg>
<div style="left:827px;top:742px;width:787px;height:2px;background:#4d6082;"></div>
<svg style="left:1598px;top:731px;" width="12" height="8" viewBox="0 0 12 8"><path d="M2 2h8l-4 4z" fill="#d6dbe9"/></svg>
<div style="left:827px;top:744px;width:786px;height:24px;background:#d6dbe9;"></div>
<div class="t" style="left:843px;top:749px;font-size:12px;color:#1b1b2b;letter-spacing:-0.1px;">File</div>
<svg style="left:826.5px;top:744px;" width="300" height="24" viewBox="0 0 300 24"><circle cx="56" cy="11" r="5.500" fill="#fff" stroke="#0f5c8c" stroke-width="2"/><path d="M60.4 15.4l4 4" stroke="#0f5c8c" stroke-width="2.300" stroke-linecap="round"/><path d="M52.8 11h6.400M56 7.8v6.400" stroke="#000" stroke-width="2"/><circle cx="84" cy="11" r="5.500" fill="#fff" stroke="#0f5c8c" stroke-width="2"/><path d="M88.4 15.4l4 4" stroke="#0f5c8c" stroke-width="2.300" stroke-linecap="round"/><path d="M80.8 11h6.400" stroke="#000" stroke-width="2"/><circle cx="110" cy="11" r="5.500" fill="#fff" stroke="#0f5c8c" stroke-width="2"/><path d="M114.4 15.4l4 4" stroke="#0f5c8c" stroke-width="2.300" stroke-linecap="round"/><circle cx="110" cy="11" r="2" fill="#000"/></svg>
<div class="t" style="left:950px;top:749px;font-size:12px;color:#1b1b2b;letter-spacing:-0.1px;">Zoom Preset</div>
<div class="t" style="left:1038px;top:749px;font-size:12px;color:#1b1b2b;letter-spacing:-0.1px;">View</div>
<div style="left:828px;top:768px;width:768px;height:244px;background:#c0c0c0;"></div>
<svg style="left:828px;top:768px;" width="768" height="244" viewBox="0 0 768 244"><path d="M1124 880.500H1185" stroke="#000" stroke-width="1" fill="none" transform="translate(-828 -768)"/><path d="M367 112.5l-11 -7.500v15z" fill="#000"/><path d="M1272 880.500H1333" stroke="#000" stroke-width="1" fill="none" transform="translate(-828 -768)"/><path d="M515 112.5l-11 -7.500v15z" fill="#000"/><path d="M976 940.500H1037" stroke="#000" stroke-width="1" fill="none" transform="translate(-828 -768)"/><path d="M219 172.5l-11 -7.500v15z" fill="#000"/><path d="M1124 940.500C1158 940.500 1152 882 1186 881" stroke="#000" stroke-width="1" fill="none" transform="translate(-828 -768)"/><path d="M1420 880.500L1441 881C1450 881 1454 884 1450 890L1437 908C1431 915 1426 917 1418 919L1150 972C1140 974.500 1135 975.500 1122 975.500H900C890 975.500 886 973 881 966L870 950C866 944 868 941.500 875 941L889 940.500" stroke="#000" stroke-width="1" fill="none" transform="translate(-828 -768)"/><path d="M71 172.5l-11 -7.500v15z" fill="#000"/><ellipse cx="257.5" cy="112.5" rx="39" ry="25" fill="#fff" stroke="#000" stroke-width="1"/><text x="257.5" y="116.0" text-anchor="middle" font-family="Liberation Sans" font-size="11" letter-spacing="-0.1" fill="#000">Init</text><ellipse cx="405.5" cy="112.5" rx="39" ry="25" fill="#fff" stroke="#000" stroke-width="1"/><text x="405.5" y="116.0" text-anchor="middle" font-family="Liberation Sans" font-size="11" letter-spacing="-0.1" fill="#000">Stopped</text><ellipse cx="553.5" cy="112.5" rx="39" ry="25" fill="#fff" stroke="#000" stroke-width="1"/><text x="553.5" y="116.0" text-anchor="middle" font-family="Liberation Sans" font-size="11" letter-spacing="-0.1" fill="#000">Starting</text><ellipse cx="109.5" cy="172.5" rx="39" ry="25" fill="#fff" stroke="#000" stroke-width="1"/><text x="109.5" y="176.0" text-anchor="middle" font-family="Liberation Sans" font-size="11" letter-spacing="-0.1" fill="#000">Moving</text><ellipse cx="257.5" cy="172.5" rx="39" ry="25" fill="#fff" stroke="#000" stroke-width="1"/><text x="257.5" y="176.0" text-anchor="middle" font-family="Liberation Sans" font-size="11" letter-spacing="-0.1" fill="#000">Stopping</text></svg>
<div style="left:1596px;top:768px;width:17px;height:244px;background:#f0f0f0;"></div>
<div style="left:1598px;top:809px;width:13px;height:134px;background:#c1c1c1;"></div>
<svg style="left:1596px;top:768px;" width="17" height="244" viewBox="0 0 17 244"><path d="M4.500 11.500l4-4 4 4" stroke="#505050" stroke-width="1.700" fill="none"/><path d="M4.500 232.500l4 4 4-4" stroke="#505050" stroke-width="1.700" fill="none"/></svg>
<div style="left:828px;top:1013px;width:768px;height:16px;background:#f0f0f0;"></div>
<div style="left:0px;top:1013px;width:0px;height:16px;background:#c1c1c1;"></div>
<svg style="left:828px;top:1012px;" width="768" height="17" viewBox="0 0 768 17"><path d="M10.800 5l-5.200 3.500 5.200 3.500" stroke="#b8b8b8" stroke-width="2" fill="none"/><path d="M757.2 5l5.200 3.500-5.200 3.500" stroke="#b8b8b8" stroke-width="2" fill="none"/></svg>
<div style="left:1596px;top:1012px;width:17px;height:17px;background:#f0f0f0;"></div>
<div style="left:828px;top:1029px;width:785px;height:22px;background:#007acc;"></div>
<div style="left:1620px;top:53px;width:294px;height:497px;background:#f0f0f0;border:1px solid #8e9bbc;"></div>
<div style="left:1620px;top:53px;width:294px;height:22px;background:#4d6082;border:1px solid #8e9bbc;border-bottom:none;"></div>
<div class="t" style="left:1625px;top:58px;font-size:12px;color:#fff;letter-spacing:-0.15px;">Selection Details</div>
<svg style="left:1862px;top:54px;" width="50" height="20" viewBox="0 0 50 20"><path d="M3 7h8l-4 4z" fill="#d6dbe9"/><path d="M20.500 4.500h4v6h-4z M19 10.500h7 M22.500 10.500v5" stroke="#e8ecf5" stroke-width="1.200" fill="none"/><path d="M23.500 4.500v6" stroke="#e8ecf5" stroke-width="1.600"/><path d="M35 5.500l8 8M43 5.500l-8 8" stroke="#e8ecf5" stroke-width="1.400" fill="none"/></svg>
<div class="t" style="left:1624px;top:78px;width:74px;height:28px;background:#f0f0f0;border:1px solid #000;text-align:center;font-size:11px;letter-spacing:-0.1px;line-height:26px">Previous</div>
<div class="t" style="left:1740px;top:78px;width:54px;height:28px;background:#f0f0f0;border:1px solid #000;text-align:center;font-size:11px;letter-spacing:-0.1px;line-height:26px">Clone</div>
<div class="t" style="left:1836px;top:78px;width:74px;height:28px;background:#f0f0f0;border:1px solid #000;text-align:center;font-size:11px;letter-spacing:-0.1px;line-height:26px">Next</div>
<div style="left:1624px;top:112px;width:286px;height:388px;background:#fff;border:1px solid #828790;"></div>
<div class="t" style="left:1650px;top:115.0px;font-size:11px;color:#000;letter-spacing:-0.25px;">Interval 21.298.452 to 21.402.561 (s.ms.µs)</div>
<div class="t" style="left:1669px;top:131.0px;font-size:11px;color:#000;letter-spacing:-0.25px;">Message 20 sent by Motor</div>
<div class="t" style="left:1668px;top:147.0px;font-size:11px;color:#000;letter-spacing:-0.25px;">Channel: HMIQueue</div>
<div class="t" style="left:1688px;top:163.0px;font-size:11px;color:#000;letter-spacing:-0.25px;">Count: 86</div>
<div class="t" style="left:1688px;top:179.0px;font-size:11px;color:#000;letter-spacing:-0.25px;">Coverage: 5.938.548 (s.ms.µs)</div>
<div class="t" style="left:1688px;top:195.0px;font-size:11px;color:#000;letter-spacing:-0.25px;">Length: 104.109 (ms.µs)</div>
<div class="t" style="left:1707px;top:211.0px;font-size:11px;color:#000;letter-spacing:-0.25px;">Shortest: 53 (µs)</div>
<div class="t" style="left:1707px;top:227.0px;font-size:11px;color:#000;letter-spacing:-0.25px;">Average: 69.053 (ms.µs)</div>
<div class="t" style="left:1707px;top:243.0px;font-size:11px;color:#000;letter-spacing:-0.25px;">Longest: 600.067 (ms.µs)</div>
<div class="t" style="left:1688px;top:259.0px;font-size:11px;color:#000;letter-spacing:-0.25px;">Separation</div>
<div class="t" style="left:1707px;top:275.0px;font-size:11px;color:#000;letter-spacing:-0.25px;">Shortest: -500.074 (ms.µs)</div>
<div class="t" style="left:1707px;top:291.0px;font-size:11px;color:#000;letter-spacing:-0.25px;">Average: 1.173.670 (s.ms.µs)</div>
<div class="t" style="left:1707px;top:307.0px;font-size:11px;color:#000;letter-spacing:-0.25px;">Longest: 3.786.038 (s.ms.µs)</div>
<div class="t" style="left:1688px;top:323.0px;font-size:11px;color:#000;letter-spacing:-0.25px;">Period</div>
<div class="t" style="left:1707px;top:339.0px;font-size:11px;color:#000;letter-spacing:-0.25px;">Shortest: 539 (µs)</div>
<div class="t" style="left:1707px;top:355.0px;font-size:11px;color:#000;letter-spacing:-0.25px;">Average: 1.242.424 (s.ms.µs)</div>
<div class="t" style="left:1707px;top:371.0px;font-size:11px;color:#000;letter-spacing:-0.25px;">Longest: 3.799.502 (s.ms.µs)</div>
<div class="t" style="left:1669px;top:387.0px;font-size:11px;color:#000;letter-spacing:-0.25px;">Value: Message: 20</div>
<svg style="left:1624px;top:112px;" width="286" height="388" viewBox="0 0 286 388"><path d="M21.0 10.5h4" stroke="#808080" stroke-width="1" stroke-dasharray="1 1" fill="none"/><path d="M34.0 26.5h9" stroke="#808080" stroke-width="1" stroke-dasharray="1 1" fill="none"/><path d="M39.0 42.5h4" stroke="#808080" stroke-width="1" stroke-dasharray="1 1" fill="none"/><path d="M53.0 58.5h9" stroke="#808080" stroke-width="1" stroke-dasharray="1 1" fill="none"/><path d="M53.0 74.5h9" stroke="#808080" stroke-width="1" stroke-dasharray="1 1" fill="none"/><path d="M58.0 90.5h4" stroke="#808080" stroke-width="1" stroke-dasharray="1 1" fill="none"/><path d="M72.0 106.5h9" stroke="#808080" stroke-width="1" stroke-dasharray="1 1" fill="none"/><path d="M72.0 122.5h9" stroke="#808080" stroke-width="1" stroke-dasharray="1 1" fill="none"/><path d="M72.0 138.5h9" stroke="#808080" stroke-width="1" stroke-dasharray="1 1" fill="none"/><path d="M58.0 154.5h4" stroke="#808080" stroke-width="1" stroke-dasharray="1 1" fill="none"/><path d="M72.0 170.5h9" stroke="#808080" stroke-width="1" stroke-dasharray="1 1" fill="none"/><path d="M72.0 186.5h9" stroke="#808080" stroke-width="1" stroke-dasharray="1 1" fill="none"/><path d="M72.0 202.5h9" stroke="#808080" stroke-width="1" stroke-dasharray="1 1" fill="none"/><path d="M58.0 218.5h4" stroke="#808080" stroke-width="1" stroke-dasharray="1 1" fill="none"/><path d="M72.0 234.5h9" stroke="#808080" stroke-width="1" stroke-dasharray="1 1" fill="none"/><path d="M72.0 250.5h9" stroke="#808080" stroke-width="1" stroke-dasharray="1 1" fill="none"/><path d="M72.0 266.5h9" stroke="#808080" stroke-width="1" stroke-dasharray="1 1" fill="none"/><path d="M34.0 282.5h9" stroke="#808080" stroke-width="1" stroke-dasharray="1 1" fill="none"/><path d="M33.5 16V282.5" stroke="#808080" stroke-width="1" stroke-dasharray="1 1" fill="none"/><path d="M52.5 48V218.5" stroke="#808080" stroke-width="1" stroke-dasharray="1 1" fill="none"/><path d="M71.5 96V138.5" stroke="#808080" stroke-width="1" stroke-dasharray="1 1" fill="none"/><path d="M71.5 160V202.5" stroke="#808080" stroke-width="1" stroke-dasharray="1 1" fill="none"/><path d="M71.5 224V266.5" stroke="#808080" stroke-width="1" stroke-dasharray="1 1" fill="none"/><rect x="11.0" y="6.0" width="9" height="9" fill="#fff" stroke="#919191" stroke-width="1"/><path d="M13.0 10.5h5" stroke="#2a3f9a" stroke-width="1"/><rect x="29.0" y="38.0" width="9" height="9" fill="#fff" stroke="#919191" stroke-width="1"/><path d="M31.0 42.5h5" stroke="#2a3f9a" stroke-width="1"/><rect x="48.0" y="86.0" width="9" height="9" fill="#fff" stroke="#919191" stroke-width="1"/><path d="M50.0 90.5h5" stroke="#2a3f9a" stroke-width="1"/><rect x="48.0" y="150.0" width="9" height="9" fill="#fff" stroke="#919191" stroke-width="1"/><path d="M50.0 154.5h5" stroke="#2a3f9a" stroke-width="1"/><rect x="48.0" y="214.0" width="9" height="9" fill="#fff" stroke="#919191" stroke-width="1"/><path d="M50.0 218.5h5" stroke="#2a3f9a" stroke-width="1"/></svg>
<div style="left:1636px;top:506px;width:50px;height:40px;background:#f0f0f0;border:1px solid #000;"></div>
<svg style="left:1620px;top:505px;" width="294" height="44" viewBox="0 0 294 44"><clipPath id="gi0"><rect x="25" y="6" width="32" height="32" rx="5"/></clipPath><rect x="25" y="6" width="32" height="32" rx="5" fill="#c0c0c0"/><g clip-path="url(#gi0)"><rect x="27.3" y="6" width="4.700" height="15" fill="#e2e2e2"/><rect x="27.3" y="18.5" width="18" height="3.500" fill="#e2e2e2"/><rect x="35" y="20" width="6" height="18" fill="#e2e2e2"/><rect x="45" y="14.5" width="12" height="5" fill="#e2e2e2"/><rect x="45" y="23" width="12" height="6" fill="#e2e2e2"/><rect x="41" y="25" width="5" height="2.500" fill="#e2e2e2"/></g><clipPath id="gi1"><rect x="131" y="6" width="32" height="32" rx="5"/></clipPath><rect x="131" y="6" width="32" height="32" rx="5" fill="#c0c0c0"/><g clip-path="url(#gi1)"><rect x="134.7" y="6" width="6" height="32" fill="#e2e2e2"/><rect x="134.7" y="18.5" width="13" height="6" fill="#e2e2e2"/><rect x="147" y="14.5" width="16" height="5.500" fill="#e2e2e2"/><rect x="147" y="23" width="16" height="5.500" fill="#e2e2e2"/></g><clipPath id="gi2"><rect x="237" y="6" width="32" height="32" rx="5"/></clipPath><rect x="237" y="6" width="32" height="32" rx="5" fill="#c0c0c0"/><g clip-path="url(#gi2)"><rect x="243" y="6" width="6" height="2" fill="#e2e2e2"/><rect x="243" y="10" width="6" height="2" fill="#e2e2e2"/><rect x="243" y="16.4" width="6" height="7.299999999999999" fill="#e2e2e2"/><rect x="243" y="26" width="6" height="2" fill="#e2e2e2"/><rect x="243" y="31.8" width="6" height="6.199999999999999" fill="#e2e2e2"/><rect x="249" y="8" width="6" height="2" fill="#e2e2e2"/><rect x="249" y="12.3" width="6" height="3.500000000000001" fill="#e2e2e2"/><rect x="249" y="24" width="6" height="2" fill="#e2e2e2"/><rect x="249" y="28" width="6" height="3.6999999999999993" fill="#e2e2e2"/><rect x="260" y="12.7" width="5" height="10.300" fill="#cdcdcd"/><rect x="260" y="26" width="5" height="6.300" fill="#cdcdcd"/></g></svg>
<div style="left:1620px;top:556px;width:294px;height:477px;background:#f0f0f0;border:1px solid #8e9bbc;"></div>
<div style="left:1620px;top:556px;width:294px;height:22px;background:#4d6082;border:1px solid #8e9bbc;border-bottom:none;"></div>
<div class="t" style="left:1625px;top:561px;font-size:12px;color:#fff;letter-spacing:-0.15px;">Filter</div>
<svg style="left:1862px;top:557px;" width="50" height="20" viewBox="0 0 50 20"><path d="M3 7h8l-4 4z" fill="#d6dbe9"/><path d="M20.500 4.500h4v6h-4z M19 10.500h7 M22.500 10.500v5" stroke="#e8ecf5" stroke-width="1.200" fill="none"/><path d="M23.500 4.500v6" stroke="#e8ecf5" stroke-width="1.600"/><path d="M35 5.500l8 8M43 5.500l-8 8" stroke="#e8ecf5" stroke-width="1.400" fill="none"/></svg>
<div class="t" style="left:1626px;top:585px;font-size:11px;color:#000;letter-spacing:-0.19px;">Filter for View</div>
<div style="left:1704px;top:581px;width:205px;height:21px;background:#e1e1e1;border:1px solid #adadad;"></div>
<div class="t" style="left:1708px;top:585px;font-size:11px;color:#000;letter-spacing:-0.1px;">Trace View</div>
<svg style="left:1893px;top:581px;" width="14" height="21" viewBox="0 0 14 21"><path d="M3 8.0l4 4 4-4" stroke="#404040" stroke-width="1.100" fill="none"/></svg>
<div style="left:1627px;top:611px;width:280px;height:21px;background:#e1e1e1;border:1px solid #adadad;"></div>
<div class="t" style="left:1631px;top:615px;font-size:11px;color:#000;letter-spacing:-0.1px;">Combined</div>
<svg style="left:1891px;top:611px;" width="14" height="21" viewBox="0 0 14 21"><path d="M3 8.0l4 4 4-4" stroke="#404040" stroke-width="1.100" fill="none"/></svg>
<div style="left:1624px;top:646px;width:286px;height:382px;border:1px solid #dcdcdc;"></div>
<div class="t" style="left:1631px;top:639px;background:#f0f0f0;padding:0 2px;font-size:11px;letter-spacing:-0.19px">Filter Objects</div>
<div style="left:1630px;top:658px;width:248px;height:19px;background:#fff;border:1px solid #7a7a7a;"></div>
<div class="t" style="left:1633px;top:661px;font-size:11px;color:#6d6d6d;letter-spacing:-0.19px;">Separate filter parts with space</div>
<div class="t" style="left:1885px;top:659px;width:18px;height:18px;background:#e1e1e1;border:1px solid #adadad;text-align:center;font-size:12px;font-weight:bold;line-height:14px">x</div>
<div style="left:1630px;top:684px;width:274px;height:286px;background:#fff;border:1px solid #828790;"></div>
<svg style="left:1630px;top:684px;overflow:hidden" width="273" height="286" viewBox="0 0 273 286"><path d="M13.5 2V282" stroke="#808080" stroke-width="1" stroke-dasharray="1 1" fill="none"/><path d="M18 11.5h7" stroke="#808080" stroke-width="1" stroke-dasharray="1 1" fill="none"/><rect x="9.0" y="7.0" width="9" height="9" fill="#fff" stroke="#919191" stroke-width="1"/><path d="M11.0 11.5h5" stroke="#2a3f9a" stroke-width="1"/><path d="M13.5 9.0v5" stroke="#2a3f9a" stroke-width="1"/><rect x="25.5" y="5.0" width="13" height="13" fill="#fff" stroke="#d0d0d0" stroke-width="1"/><path d="M18 29.5h7" stroke="#808080" stroke-width="1" stroke-dasharray="1 1" fill="none"/><rect x="9.0" y="25.0" width="9" height="9" fill="#fff" stroke="#919191" stroke-width="1"/><path d="M11.0 29.5h5" stroke="#2a3f9a" stroke-width="1"/><rect x="25.5" y="23.0" width="13" height="13" fill="#fff" stroke="#d0d0d0" stroke-width="1"/><path d="M25.5 36.0v-13h13" stroke="#505050" stroke-width="1.400" fill="none"/><rect x="29" y="26.0" width="8" height="8" fill="#a8a8a8"/><path d="M18 281.5h7" stroke="#808080" stroke-width="1" stroke-dasharray="1 1" fill="none"/><rect x="9.0" y="277.0" width="9" height="9" fill="#fff" stroke="#919191" stroke-width="1"/><path d="M11.0 281.5h5" stroke="#2a3f9a" stroke-width="1"/><path d="M13.5 279.0v5" stroke="#2a3f9a" stroke-width="1"/><rect x="25.5" y="275.0" width="13" height="13" fill="#fff" stroke="#d0d0d0" stroke-width="1"/><path d="M32.5 37V263.5" stroke="#808080" stroke-width="1" stroke-dasharray="1 1" fill="none"/><path d="M33 47.5h11" stroke="#808080" stroke-width="1" stroke-dasharray="1 1" fill="none"/><rect x="44.5" y="41.0" width="13" height="13" fill="#ff0000" stroke="#000" stroke-width="1"/><path d="M33 65.5h11" stroke="#808080" stroke-width="1" stroke-dasharray="1 1" fill="none"/><rect x="44.5" y="59.0" width="13" height="13" fill="#fff" stroke="#d0d0d0" stroke-width="1"/><path d="M33 83.5h11" stroke="#808080" stroke-width="1" stroke-dasharray="1 1" fill="none"/><rect x="44.5" y="77.0" width="13" height="13" fill="#fff" stroke="#d0d0d0" stroke-width="1"/><path d="M33 101.5h11" stroke="#808080" stroke-width="1" stroke-dasharray="1 1" fill="none"/><rect x="44.5" y="95.0" width="13" height="13" fill="#ff99ff" stroke="#000" stroke-width="1"/><path d="M33 119.5h11" stroke="#808080" stroke-width="1" stroke-dasharray="1 1" fill="none"/><rect x="44.5" y="113.0" width="13" height="13" fill="#ff9900" stroke="#000" stroke-width="1"/><path d="M33 137.5h11" stroke="#808080" stroke-width="1" stroke-dasharray="1 1" fill="none"/><rect x="44.5" y="131.0" width="13" height="13" fill="#00ffff" stroke="#000" stroke-width="1"/><path d="M33 155.5h11" stroke="#808080" stroke-width="1" stroke-dasharray="1 1" fill="none"/><rect x="44.5" y="149.0" width="13" height="13" fill="#cc6699" stroke="#000" stroke-width="1"/><path d="M33 173.5h11" stroke="#808080" stroke-width="1" stroke-dasharray="1 1" fill="none"/><rect x="44.5" y="167.0" width="13" height="13" fill="#808000" stroke="#000" stroke-width="1"/><path d="M33 191.5h11" stroke="#808080" stroke-width="1" stroke-dasharray="1 1" fill="none"/><rect x="44.5" y="185.0" width="13" height="13" fill="#fff" stroke="#d0d0d0" stroke-width="1"/><path d="M33 209.5h11" stroke="#808080" stroke-width="1" stroke-dasharray="1 1" fill="none"/><rect x="44.5" y="203.0" width="13" height="13" fill="#9900cc" stroke="#000" stroke-width="1"/><path d="M33 227.5h11" stroke="#808080" stroke-width="1" stroke-dasharray="1 1" fill="none"/><rect x="44.5" y="221.0" width="13" height="13" fill="#f0d8c8" stroke="#000" stroke-width="1"/><path d="M33 245.5h11" stroke="#808080" stroke-width="1" stroke-dasharray="1 1" fill="none"/><rect x="44.5" y="239.0" width="13" height="13" fill="#008080" stroke="#000" stroke-width="1"/><path d="M33 263.5h11" stroke="#808080" stroke-width="1" stroke-dasharray="1 1" fill="none"/><rect x="44.5" y="257.0" width="13" height="13" fill="#ff9966" stroke="#000" stroke-width="1"/></svg>
<div style="left:1631px;top:685px;width:255px;height:284px;overflow:hidden">
<div class="t" style="left:44px;top:3.5px;font-size:11px;letter-spacing:-0.34px;color:#6d6d6d">Services</div>
<div class="t" style="left:44px;top:21.5px;font-size:11px;letter-spacing:-0.34px;color:#000">Objects</div>
<div class="t" style="left:44px;top:273.5px;font-size:11px;letter-spacing:-0.34px;color:#6d6d6d">Notice Channels</div>
<div class="t" style="left:63px;top:39.5px;font-size:11px;letter-spacing:-0.34px;color:#000">Control (1 use)</div>
<div class="t" style="left:63px;top:57.5px;font-size:11px;letter-spacing:-0.34px;color:#7f7f7f">CtrlCmdQueue (27393 uses)</div>
<div class="t" style="left:63px;top:75.5px;font-size:11px;letter-spacing:-0.34px;color:#7f7f7f">CtrlDataQueue (77596 uses)</div>
<div class="t" style="left:63px;top:93.5px;font-size:11px;letter-spacing:-0.34px;color:#000">HMI (1 use)</div>
<div class="t" style="left:63px;top:111.5px;font-size:11px;letter-spacing:-0.34px;color:#000">HMIQueue (1156 uses)</div>
<div class="t" style="left:63px;top:129.5px;font-size:11px;letter-spacing:-0.34px;color:#000">IDLE (1 use)</div>
<div class="t" style="left:63px;top:147.5px;font-size:11px;letter-spacing:-0.34px;color:#000">ISRs (0 uses)</div>
<div class="t" style="left:63px;top:165.5px;font-size:11px;letter-spacing:-0.34px;color:#000">Motor (1 use)</div>
<div class="t" style="left:63px;top:183.5px;font-size:11px;letter-spacing:-0.34px;color:#7f7f7f">MotorQueue (18393 uses)</div>
<div class="t" style="left:63px;top:201.5px;font-size:11px;letter-spacing:-0.34px;color:#000">Pos_ADC_ISR (0 uses)</div>
<div class="t" style="left:63px;top:219.5px;font-size:11px;letter-spacing:-0.34px;color:#000">System Heap (12 uses)</div>
<div class="t" style="left:63px;top:237.5px;font-size:11px;letter-spacing:-0.34px;color:#000">Tasks (0 uses)</div>
<div class="t" style="left:63px;top:255.5px;font-size:11px;letter-spacing:-0.34px;color:#000">TzCtrl (0 uses)</div>
</div>
<div style="left:1886px;top:685px;width:17px;height:284px;background:#f0f0f0;"></div>
<div style="left:1887px;top:716px;width:14px;height:197px;background:#c1c1c1;"></div>
<svg style="left:1886px;top:685px;" width="16" height="284" viewBox="0 0 16 284"><path d="M4 12.500l4-4 4 4" stroke="#505050" stroke-width="1.700" fill="none"/><path d="M4 273l4 4 4-4" stroke="#505050" stroke-width="1.700" fill="none"/></svg>
<div class="t" style="left:1631px;top:978px;width:82px;height:21px;background:#e1e1e1;border:1px solid #adadad;text-align:center;font-size:11px;letter-spacing:-0.1px;line-height:18px">Enable All</div>
<div class="t" style="left:1721px;top:978px;width:82px;height:21px;background:#e1e1e1;border:1px solid #adadad;text-align:center;font-size:11px;letter-spacing:-0.1px;line-height:18px">Disable All</div>
<div class="t" style="left:1632px;top:1009px;font-size:11px;color:#000;letter-spacing:-0.19px;">133 items</div>
<div style="left:1621px;top:1032px;width:37px;height:19px;background:#fff;"></div>
<div class="t" style="left:1625px;top:1036px;font-size:12px;color:#000;letter-spacing:-0.1px;">Filter</div>
<div class="t" style="left:1663px;top:1036px;font-size:12px;color:#fff;letter-spacing:-0.1px;">Performed Events</div>
<div style="left:827px;top:74px;width:1px;height:315px;background:#8e9bbc;"></div>
<div style="left:1613px;top:74px;width:1px;height:315px;background:rgba(154,167,204,0.6);"></div>
<div style="left:827px;top:388px;width:787px;height:1px;background:rgba(154,167,204,0.6);"></div>
<div style="left:827px;top:416px;width:1px;height:301px;background:#8e9bbc;"></div>
<div style="left:1613px;top:416px;width:1px;height:301px;background:rgba(154,167,204,0.6);"></div>
<div style="left:827px;top:716px;width:787px;height:1px;background:rgba(154,167,204,0.6);"></div>
<div style="left:827px;top:744px;width:1px;height:308px;background:#8e9bbc;"></div>
<div style="left:1613px;top:744px;width:1px;height:308px;background:rgba(154,167,204,0.6);"></div>
<div style="left:827px;top:1051px;width:787px;height:1px;background:rgba(154,167,204,0.6);"></div>
</body></html>
